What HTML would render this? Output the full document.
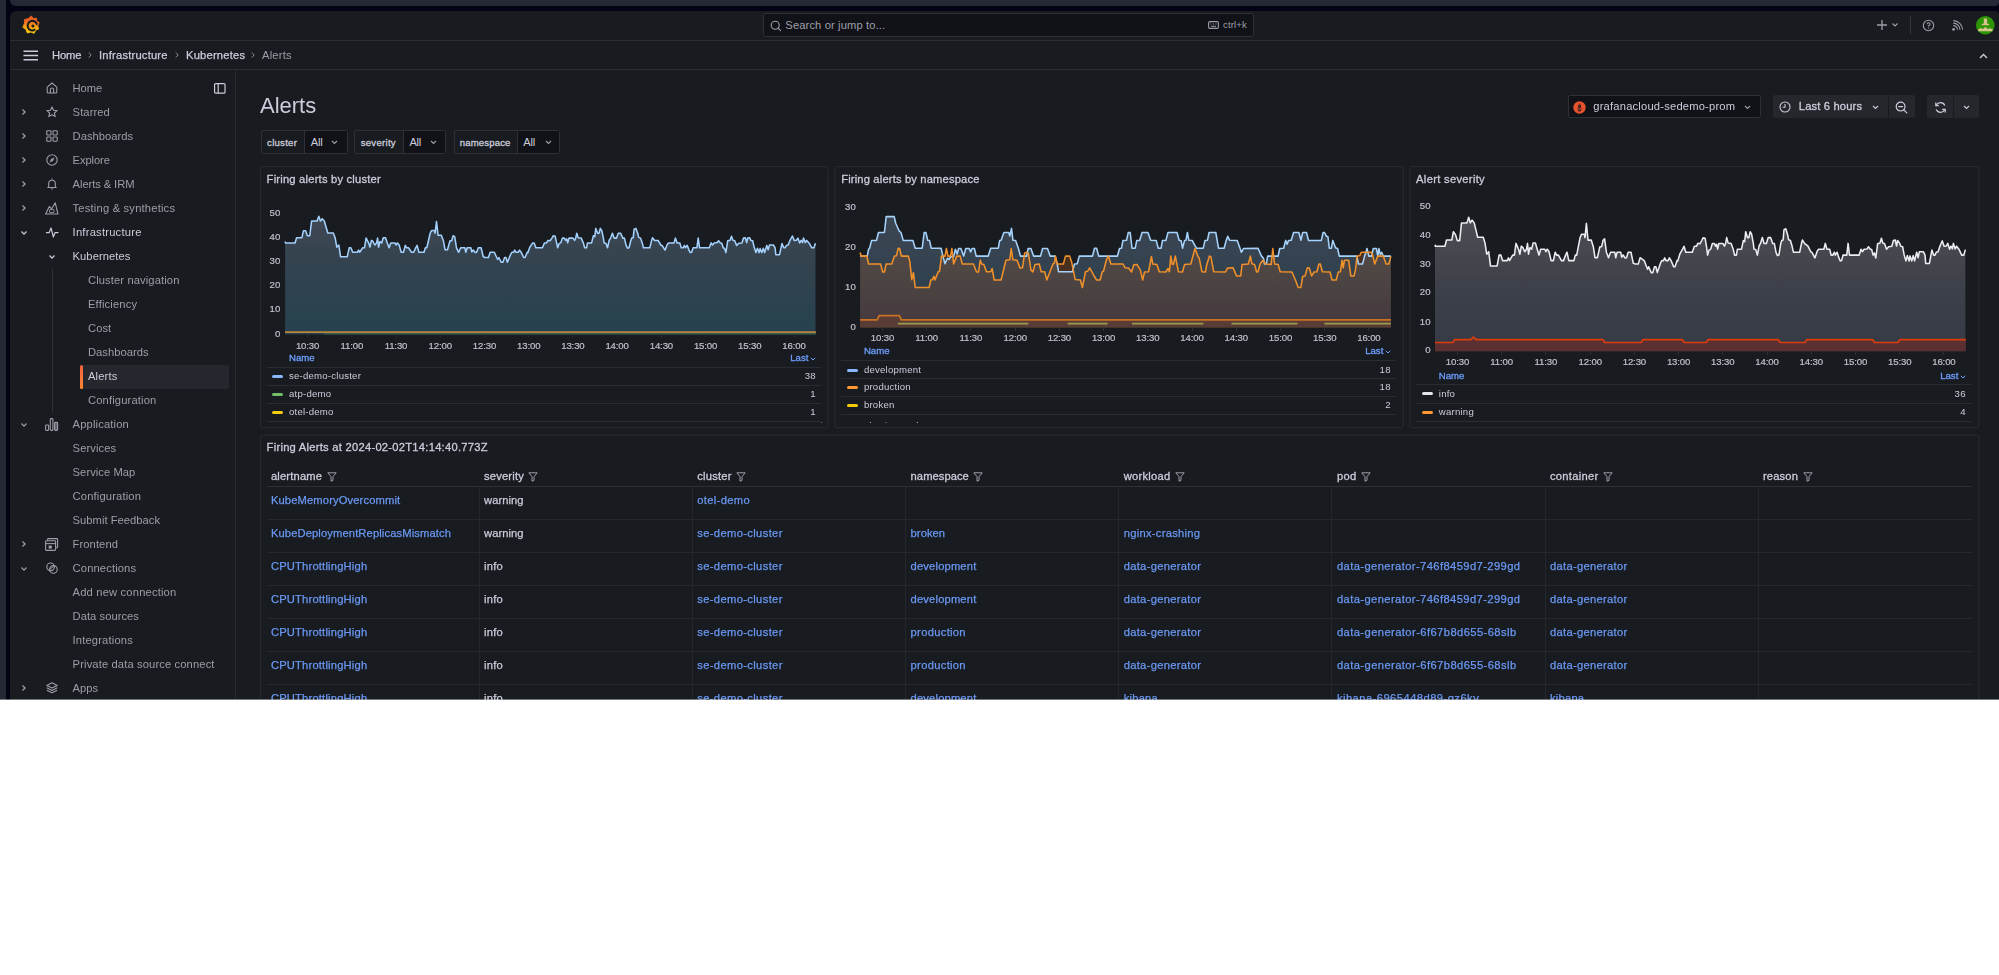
<!DOCTYPE html>
<html lang="en"><head><meta charset="utf-8"><title>Alerts - Kubernetes - Infrastructure - Grafana</title>
<style>
html,body{margin:0;padding:0}
body{width:1999px;height:975px;overflow:hidden;background:#fff;position:relative;font-family:"Liberation Sans",sans-serif;color:#ccccdc}
#frame{position:absolute;left:0;top:0;width:1999px;height:700px;background:#020416;overflow:hidden}
.lstrip{position:absolute;left:0;top:0;width:6px;height:700px;background:#252936}
.tcard{position:absolute;left:10px;top:0;width:1989px;height:6px;background:#252936;border-radius:0 0 4px 6px}
#app{position:absolute;left:10px;top:11px;width:1989px;height:689px;background:#181b1f;border-radius:6px 4px 0 0}
.abs{position:absolute}
.t{position:absolute;white-space:nowrap;line-height:1}
.hl{position:absolute;height:1px;background:#2c2e34}
.vl{position:absolute;width:1px;background:#2c2e34}
svg{position:absolute;overflow:visible}
.pri{color:#ccccdc}
.sec{color:#9d9eab}
.lnk{color:#6e9fff}
#content{position:absolute;left:0;top:0;width:1999px;height:760px;filter:blur(0.4px)}
.bfade{position:absolute;left:0;top:699px;width:1999px;height:1px;background:rgba(255,255,255,0.4)}

</style></head>
<body>
<div id="frame">
<div class="lstrip"></div><div class="tcard"></div>
<div id="app"></div>
<div id="content">
<!-- top bar -->
<div class="hl" style="left:10px;top:40px;width:1989px"></div>
<div class="hl" style="left:10px;top:69px;width:1989px"></div>
<svg style="left:22px;top:15px" width="18" height="19.8" viewBox="0 0 18 19" preserveAspectRatio="none">
<defs><linearGradient id="gl" gradientUnits="userSpaceOnUse" x1="0" y1="18" x2="0" y2="1"><stop offset="0" stop-color="#fcd40a"/><stop offset="0.35" stop-color="#f8a612"/><stop offset="0.7" stop-color="#f26a22"/><stop offset="1" stop-color="#f05a28"/></linearGradient></defs>
<path fill="url(#gl)" stroke="url(#gl)" stroke-width="0.8" stroke-linejoin="round" d="M9.3 0.9 L11.4 3.3 L14.5 3.0 L14.7 5.9 L17.2 7.2 L15.8 10.2 L16.6 13.5 L13.6 14.6 L12.2 17.6 L8.8 16.4 L5.3 17.3 L3.8 13.8 L0.8 11.8 L2.4 8.0 L2.5 4.2 L6.2 3.5Z"/>
<path d="M14.84 8.56 L14.47 7.87 L14.00 7.24 L13.43 6.70 L12.78 6.25 L12.08 5.92 L11.33 5.71 L10.56 5.62 L9.79 5.66 L9.04 5.82 L8.32 6.10 L7.67 6.49 L7.08 6.97 L6.59 7.55 L6.19 8.19 L5.90 8.89 L5.73 9.62 L5.68 10.36 L5.75 11.10 L5.94 11.82 L6.24 12.50 L6.65 13.11 L7.14 13.65 L7.72 14.11 L8.36 14.46 L9.04 14.70 L9.75 14.83 L10.47 14.85 L11.18 14.74 L11.86 14.53 L12.50 14.21" fill="none" stroke="#181b1f" stroke-width="2" stroke-linecap="round"/>
<circle cx="10.900" cy="10.500" r="1.500" fill="#181b1f"/>
</svg>
<!-- search -->
<div class="abs" style="left:763px;top:13px;width:491px;height:24px;background:#111217;border:1px solid #2e3036;border-radius:2px;box-sizing:border-box"></div>
<svg style="left:770px;top:19.500px" width="12" height="12" viewBox="0 0 12 12"><circle cx="5.2" cy="5.2" r="4" fill="none" stroke="#9d9eab" stroke-width="1.1"/><path d="M8.2 8.2 L10.6 10.6" stroke="#9d9eab" stroke-width="1.1" stroke-linecap="round"/></svg>
<div class="t sec" style="left:785.300px;top:20px;font-size:11.2px;letter-spacing:0.12px">Search or jump to...</div>
<svg style="left:1208px;top:21px" width="11" height="8" viewBox="0 0 11 8"><rect x="0.6" y="0.6" width="9.8" height="6.8" rx="1.4" fill="none" stroke="#9d9eab" stroke-width="1.1"/><path d="M2.5 3h1M5 3h1M7.5 3h1M3 5.3h5" stroke="#9d9eab" stroke-width="1"/></svg>
<div class="t sec" style="left:1223px;top:20px;font-size:9.6px;letter-spacing:0.1px">ctrl+k</div>
<!-- right icons -->
<svg style="left:1876px;top:19px" width="12" height="12" viewBox="0 0 12 12"><path d="M6 1v10M1 6h10" stroke="#9d9eab" stroke-width="1.3" fill="none"/></svg>
<svg style="left:1891px;top:22px" width="8" height="6" viewBox="0 0 8 6"><path d="M1.5 1.5L4 4l2.5-2.5" stroke="#9d9eab" stroke-width="1.1" fill="none"/></svg>
<div class="vl" style="left:1910px;top:16px;height:18px;background:#34363d"></div>
<svg style="left:1922px;top:19px" width="13" height="13" viewBox="0 0 13 13"><circle cx="6.5" cy="6.5" r="5.2" fill="none" stroke="#9d9eab" stroke-width="1.1"/><path d="M5.2 5.2a1.4 1.4 0 1 1 1.9 1.3c-.4.2-.6.4-.6.9" fill="none" stroke="#9d9eab" stroke-width="1.1"/><circle cx="6.5" cy="9.1" r="0.7" fill="#9d9eab"/></svg>
<svg style="left:1951px;top:19px" width="13" height="13" viewBox="0 0 13 13"><circle cx="2.6" cy="10.4" r="1.4" fill="#9d9eab"/><path d="M2.3 6.6a4.2 4.2 0 0 1 4.2 4.2M2.3 4.1a6.7 6.7 0 0 1 6.7 6.7M2.3 1.6a9.2 9.2 0 0 1 9.2 9.2" fill="none" stroke="#9d9eab" stroke-width="1.1"/></svg>
<svg style="left:1976.400px;top:15.600px" width="18.600" height="18.600" viewBox="0 0 18.600 18.600"><circle cx="9.300" cy="9.300" r="9.300" fill="#2c9605"/><path d="M7.800 2.600H11.100V7.400L13.200 8V9.300H5.700V8L7.800 7.400Z" fill="#d9c48f"/><path d="M2.200 13.300L3.800 12.800L4.600 11.400L5.400 12.800L7.200 13L8 11.600H10.800L11.600 13L13.200 12.800L14 11.400L14.800 12.800L16.600 13.300V15.200H2.200Z" fill="#d9c48f"/></svg>
<!-- breadcrumb -->
<svg style="left:23px;top:50px" width="16" height="11" viewBox="0 0 16 11"><path d="M0.5 1.2h14.5M0.5 5.5h14.5M0.5 9.8h14.5" stroke="#ccccdc" stroke-width="1.5" fill="none"/></svg>
<div class="t pri" style="left:52px;top:50px;font-size:11.2px;letter-spacing:-0.1px;-webkit-text-stroke:0.25px #ccccdc">Home</div>
<svg style="left:87px;top:51px" width="6" height="8" viewBox="0 0 6 8"><path d="M1.800 1.500L4.200 4L1.800 6.500" stroke="#8e8f9c" stroke-width="1" fill="none"/></svg>
<div class="t pri" style="left:99px;top:50px;font-size:11.2px;letter-spacing:0.2px;-webkit-text-stroke:0.25px #ccccdc">Infrastructure</div>
<svg style="left:174px;top:51px" width="6" height="8" viewBox="0 0 6 8"><path d="M1.800 1.500L4.200 4L1.800 6.500" stroke="#8e8f9c" stroke-width="1" fill="none"/></svg>
<div class="t pri" style="left:186px;top:50px;font-size:11.2px;letter-spacing:0.2px;-webkit-text-stroke:0.25px #ccccdc">Kubernetes</div>
<svg style="left:250px;top:51px" width="6" height="8" viewBox="0 0 6 8"><path d="M1.800 1.500L4.200 4L1.800 6.500" stroke="#8e8f9c" stroke-width="1" fill="none"/></svg>
<div class="t sec" style="left:262px;top:50px;font-size:11.2px;letter-spacing:0.2px">Alerts</div>
<svg style="left:1979px;top:53px" width="9" height="6" viewBox="0 0 9 6"><path d="M1 5L4.5 1.5L8 5" stroke="#ccccdc" stroke-width="1.4" fill="none"/></svg>
<!-- sidebar -->
<div class="vl" style="left:235px;top:70px;height:630px;background:#272a2f"></div>
<div class="vl" style="left:52px;top:269px;height:144px;background:#2f3137"></div>
<div class="abs" style="left:80px;top:365px;width:149px;height:24px;background:#24272d;border-radius:2px"></div>
<div class="abs" style="left:80px;top:365px;width:3px;height:24px;background:linear-gradient(#f55f3e,#ff8833);border-radius:2px"></div>
<svg style="left:214px;top:83px" width="12" height="11" viewBox="0 0 12 11"><rect x="0.6" y="0.6" width="10.4" height="9.6" rx="1" fill="none" stroke="#ccccdc" stroke-width="1.2"/><path d="M4.2 0.6V10.2" stroke="#ccccdc" stroke-width="1.2"/></svg>
<div class="t sec" style="left:72.6px;top:83px;font-size:11.2px;letter-spacing:-0.061px">Home</div>
<svg style="left:45.8px;top:82.4px" width="12" height="12" viewBox="0 0 12 12"><path d="M1.2 5.2 L6 1 L10.8 5.2 V10 a1 1 0 0 1 -1 1 H2.2 a1 1 0 0 1 -1 -1 Z" fill="none" stroke="#9d9eab" stroke-width="1.1" stroke-linejoin="round"/><path d="M4.4 11 V7.6 a1.6 1.6 0 0 1 3.2 0 V11" fill="none" stroke="#9d9eab" stroke-width="1.1"/></svg>
<div class="t sec" style="left:72.6px;top:107px;font-size:11.2px;letter-spacing:0.087px">Starred</div>
<svg style="left:45.8px;top:106.4px" width="12" height="12" viewBox="0 0 12 12"><path d="M6 0.9 L7.5 4.2 L11.1 4.6 L8.4 7 L9.2 10.6 L6 8.8 L2.8 10.6 L3.6 7 L0.9 4.6 L4.5 4.2 Z" fill="none" stroke="#9d9eab" stroke-width="1.1" stroke-linejoin="round"/></svg>
<svg style="left:21.3px;top:108.2px" width="6" height="8" viewBox="0 0 6 8"><path d="M1.5 1.5L4.1 4L1.5 6.5" stroke="#9d9eab" stroke-width="1.25" fill="none"/></svg>
<div class="t sec" style="left:72.6px;top:131px;font-size:11.2px;letter-spacing:0.027px">Dashboards</div>
<svg style="left:45.8px;top:130.4px" width="12" height="12" viewBox="0 0 12 12"><rect x="0.8" y="0.8" width="4.2" height="4.2" rx="0.6" fill="none" stroke="#9d9eab" stroke-width="1.1"/><rect x="7" y="0.8" width="4.2" height="4.2" rx="0.6" fill="none" stroke="#9d9eab" stroke-width="1.1"/><rect x="0.8" y="7" width="4.2" height="4.2" rx="0.6" fill="none" stroke="#9d9eab" stroke-width="1.1"/><rect x="7" y="7" width="4.2" height="4.2" rx="0.6" fill="none" stroke="#9d9eab" stroke-width="1.1"/></svg>
<svg style="left:21.3px;top:132.2px" width="6" height="8" viewBox="0 0 6 8"><path d="M1.5 1.5L4.1 4L1.5 6.5" stroke="#9d9eab" stroke-width="1.25" fill="none"/></svg>
<div class="t sec" style="left:72.6px;top:155px;font-size:11.2px;letter-spacing:-0.105px">Explore</div>
<svg style="left:45.8px;top:154.4px" width="12" height="12" viewBox="0 0 12 12"><circle cx="6" cy="6" r="5.2" fill="none" stroke="#9d9eab" stroke-width="1.1"/><path d="M8.4 3.6 L7 7 L3.6 8.4 L5 5 Z" fill="#9d9eab"/></svg>
<svg style="left:21.3px;top:156.2px" width="6" height="8" viewBox="0 0 6 8"><path d="M1.5 1.5L4.1 4L1.5 6.5" stroke="#9d9eab" stroke-width="1.25" fill="none"/></svg>
<div class="t sec" style="left:72.6px;top:179px;font-size:11.2px;letter-spacing:-0.083px">Alerts &amp; IRM</div>
<svg style="left:45.8px;top:178.4px" width="12" height="12" viewBox="0 0 12 12"><path d="M2.700 8.500 V5.500 a3.300 3.300 0 0 1 6.600 0 V8.500 l0.900 1 H1.800 Z" fill="none" stroke="#9d9eab" stroke-width="1.1" stroke-linejoin="round"/><path d="M4.6 10.6 a1.5 1.5 0 0 0 2.8 0 Z" fill="#9d9eab"/><path d="M6 0.4 V1.8" stroke="#9d9eab" stroke-width="1.1"/></svg>
<svg style="left:21.3px;top:180.2px" width="6" height="8" viewBox="0 0 6 8"><path d="M1.5 1.5L4.1 4L1.5 6.5" stroke="#9d9eab" stroke-width="1.25" fill="none"/></svg>
<div class="t sec" style="left:72.6px;top:203px;font-size:11.2px;letter-spacing:0.186px">Testing &amp; synthetics</div>
<svg style="left:44.8px;top:201.9px" width="14" height="13" viewBox="0 0 14 13"><path d="M0.6 12 L4.4 4.4 L6.6 7 L10.2 0.8 L13 12 Z" fill="none" stroke="#9d9eab" stroke-width="1.1" stroke-linejoin="round"/><rect x="4.6" y="7.6" width="4.4" height="3" rx="0.5" fill="none" stroke="#9d9eab" stroke-width="0.9"/></svg>
<svg style="left:21.3px;top:204.2px" width="6" height="8" viewBox="0 0 6 8"><path d="M1.5 1.5L4.1 4L1.5 6.5" stroke="#9d9eab" stroke-width="1.25" fill="none"/></svg>
<div class="t pri" style="left:72.6px;top:227px;font-size:11.2px;letter-spacing:0.220px">Infrastructure</div>
<svg style="left:45.8px;top:226.4px" width="12" height="12" viewBox="0 0 12 12"><path d="M0.4 6.6 H3.2 L5 2 L7.4 11 L9 6.6 H12" fill="none" stroke="#ccccdc" stroke-width="1.2" stroke-linejoin="round" stroke-linecap="round"/></svg>
<svg style="left:20.2px;top:229.6px" width="8" height="6" viewBox="0 0 8 6"><path d="M1.5 1.5L4 4.1L6.5 1.5" stroke="#ccccdc" stroke-width="1.25" fill="none"/></svg>
<div class="t pri" style="left:72.6px;top:251px;font-size:11.2px;letter-spacing:0.047px">Kubernetes</div>
<svg style="left:47.6px;top:253.6px" width="8" height="6" viewBox="0 0 8 6"><path d="M1.5 1.5L4 4.1L6.5 1.5" stroke="#ccccdc" stroke-width="1.25" fill="none"/></svg>
<div class="t sec" style="left:88.0px;top:275px;font-size:11.2px;letter-spacing:0.108px">Cluster navigation</div>
<div class="t sec" style="left:88.0px;top:299px;font-size:11.2px;letter-spacing:0.151px">Efficiency</div>
<div class="t sec" style="left:88.0px;top:323px;font-size:11.2px;letter-spacing:0.071px">Cost</div>
<div class="t sec" style="left:88.0px;top:347px;font-size:11.2px;letter-spacing:0.027px">Dashboards</div>
<div class="t pri" style="left:88.0px;top:371px;font-size:11.2px;letter-spacing:0.148px">Alerts</div>
<div class="t sec" style="left:88.0px;top:395px;font-size:11.2px;letter-spacing:0.150px">Configuration</div>
<div class="t sec" style="left:72.6px;top:419px;font-size:11.2px;letter-spacing:0.151px">Application</div>
<svg style="left:45.3px;top:417.9px" width="13" height="13" viewBox="0 0 13 13"><rect x="0.6" y="7" width="3" height="5.4" rx="0.8" fill="none" stroke="#9d9eab" stroke-width="1.1"/><rect x="5.3" y="0.6" width="2.6" height="11.8" rx="0.8" fill="none" stroke="#9d9eab" stroke-width="1.1"/><rect x="9.6" y="4.4" width="3" height="8" rx="0.8" fill="#9d9eab" fill-opacity="0.5" stroke="#9d9eab" stroke-width="1.1"/></svg>
<svg style="left:20.2px;top:421.6px" width="8" height="6" viewBox="0 0 8 6"><path d="M1.5 1.5L4 4.1L6.5 1.5" stroke="#9d9eab" stroke-width="1.25" fill="none"/></svg>
<div class="t sec" style="left:72.6px;top:443px;font-size:11.2px;letter-spacing:0.087px">Services</div>
<div class="t sec" style="left:72.6px;top:467px;font-size:11.2px;letter-spacing:0.056px">Service Map</div>
<div class="t sec" style="left:72.6px;top:491px;font-size:11.2px;letter-spacing:0.150px">Configuration</div>
<div class="t sec" style="left:72.6px;top:515px;font-size:11.2px;letter-spacing:0.023px">Submit Feedback</div>
<div class="t sec" style="left:72.6px;top:539px;font-size:11.2px;letter-spacing:0.077px">Frontend</div>
<svg style="left:45.3px;top:537.9px" width="13" height="13" viewBox="0 0 13 13"><path d="M2.6 2.6 V1.4 a0.8 0.8 0 0 1 0.8 -0.8 H11.8 a0.8 0.8 0 0 1 0.8 0.8 V9 a0.8 0.8 0 0 1 -0.8 0.8 H10.8" fill="none" stroke="#9d9eab" stroke-width="1.1"/><rect x="0.6" y="2.8" width="10" height="9.6" rx="0.8" fill="none" stroke="#9d9eab" stroke-width="1.1"/><path d="M0.6 5.6 H10.6" stroke="#9d9eab" stroke-width="1.1"/><rect x="3.6" y="7.6" width="3.2" height="3" fill="#9d9eab"/></svg>
<svg style="left:21.3px;top:540.2px" width="6" height="8" viewBox="0 0 6 8"><path d="M1.5 1.5L4.1 4L1.5 6.5" stroke="#9d9eab" stroke-width="1.25" fill="none"/></svg>
<div class="t sec" style="left:72.6px;top:563px;font-size:11.2px;letter-spacing:0.127px">Connections</div>
<svg style="left:45.8px;top:562.4px" width="12" height="12" viewBox="0 0 12 12"><circle cx="4.6" cy="4.8" r="3.8" fill="none" stroke="#9d9eab" stroke-width="1.1"/><circle cx="7.4" cy="7.4" r="3.8" fill="none" stroke="#9d9eab" stroke-width="1.1"/><path d="M4 7 L7.6 4.6" stroke="#9d9eab" stroke-width="1"/></svg>
<svg style="left:20.2px;top:565.6px" width="8" height="6" viewBox="0 0 8 6"><path d="M1.5 1.5L4 4.1L6.5 1.5" stroke="#9d9eab" stroke-width="1.25" fill="none"/></svg>
<div class="t sec" style="left:72.6px;top:587px;font-size:11.2px;letter-spacing:0.169px">Add new connection</div>
<div class="t sec" style="left:72.6px;top:611px;font-size:11.2px;letter-spacing:0.040px">Data sources</div>
<div class="t sec" style="left:72.6px;top:635px;font-size:11.2px;letter-spacing:0.153px">Integrations</div>
<div class="t sec" style="left:72.6px;top:659px;font-size:11.2px;letter-spacing:0.123px">Private data source connect</div>
<div class="t sec" style="left:72.6px;top:683px;font-size:11.2px;letter-spacing:0.025px">Apps</div>
<svg style="left:45.8px;top:682.4px" width="12" height="12" viewBox="0 0 12 12"><path d="M6 0.8 L11.2 3.4 L6 6 L0.8 3.4 Z" fill="none" stroke="#9d9eab" stroke-width="1.1" stroke-linejoin="round"/><path d="M0.8 5.8 L6 8.4 L11.2 5.8 M0.8 8.2 L6 10.8 L11.2 8.2" fill="none" stroke="#9d9eab" stroke-width="1.1" stroke-linejoin="round"/></svg>
<svg style="left:21.3px;top:684.2px" width="6" height="8" viewBox="0 0 6 8"><path d="M1.5 1.5L4.1 4L1.5 6.5" stroke="#9d9eab" stroke-width="1.25" fill="none"/></svg>
<!-- main header -->
<div class="t pri" style="left:260px;top:95px;font-size:22px;letter-spacing:-0.008px">Alerts</div>
<div class="abs" style="left:260.6px;top:130px;width:87.2px;height:24px;box-sizing:border-box;border:1px solid #2e3036;border-radius:2px;background:#181b1f"></div>
<div class="abs" style="left:304.0px;top:131px;width:41.6px;height:22px;background:#111217;border-left:1px solid #2e3036"></div>
<div class="t pri" style="left:267.1px;top:138px;font-size:9.6px;letter-spacing:0.248px;-webkit-text-stroke:0.3px #ccccdc">cluster</div>
<div class="t pri" style="left:310.7px;top:137px;font-size:11.2px;letter-spacing:-0.246px">All</div>
<svg style="left:331.1px;top:140px" width="7" height="5" viewBox="0 0 7 5"><path d="M1 1L3.5 3.5L6 1" stroke="#9d9eab" stroke-width="1.1" fill="none"/></svg>
<div class="abs" style="left:354.4px;top:130px;width:91.3px;height:24px;box-sizing:border-box;border:1px solid #2e3036;border-radius:2px;background:#181b1f"></div>
<div class="abs" style="left:402.5px;top:131px;width:41.0px;height:22px;background:#111217;border-left:1px solid #2e3036"></div>
<div class="t pri" style="left:360.7px;top:138px;font-size:9.6px;letter-spacing:0.267px;-webkit-text-stroke:0.3px #ccccdc">severity</div>
<div class="t pri" style="left:409.4px;top:137px;font-size:11.2px;letter-spacing:-0.246px">All</div>
<svg style="left:430.2px;top:140px" width="7" height="5" viewBox="0 0 7 5"><path d="M1 1L3.5 3.5L6 1" stroke="#9d9eab" stroke-width="1.1" fill="none"/></svg>
<div class="abs" style="left:453.5px;top:130px;width:106.6px;height:24px;box-sizing:border-box;border:1px solid #2e3036;border-radius:2px;background:#181b1f"></div>
<div class="abs" style="left:516.5px;top:131px;width:41.4px;height:22px;background:#111217;border-left:1px solid #2e3036"></div>
<div class="t pri" style="left:459.8px;top:138px;font-size:9.6px;letter-spacing:0.132px;-webkit-text-stroke:0.3px #ccccdc">namespace</div>
<div class="t pri" style="left:523.2px;top:137px;font-size:11.2px;letter-spacing:-0.246px">All</div>
<svg style="left:544.5px;top:140px" width="7" height="5" viewBox="0 0 7 5"><path d="M1 1L3.5 3.5L6 1" stroke="#9d9eab" stroke-width="1.1" fill="none"/></svg>
<div class="abs" style="left:1567.5px;top:95px;width:193px;height:23px;box-sizing:border-box;border:1px solid #2e3036;border-radius:2px;background:#111217"></div>
<svg style="left:1573.3px;top:100.6px" width="13" height="13" viewBox="0 0 13 13"><circle cx="6.5" cy="6.5" r="6.2" fill="#e6522c"/><path d="M6.5 2.2c.3 1 1.6 1.5 1.6 3.1 0 .8-.3 1.3-.6 1.7H5.500c-.3-.4-.6-.9-.6-1.700 0-.7.5-1 .8-1.500.2.500.3.700.500.900.2-.800.1-1.700.3-2.500Z M4.300 7.600h4.400v.9H4.300Z M4.900 9h3.200a1.600 1.600 0 0 1-3.200 0Z" fill="#181b1f" fill-opacity="0.85"/></svg>
<div class="t pri" style="left:1593.3px;top:101px;font-size:11.2px;letter-spacing:0.190px">grafanacloud-sedemo-prom</div>
<svg style="left:1744px;top:104.5px" width="7" height="5" viewBox="0 0 7 5"><path d="M1 1L3.5 3.5L6 1" stroke="#9d9eab" stroke-width="1.1" fill="none"/></svg>
<div class="abs" style="left:1772.5px;top:95px;width:142.5px;height:23px;border-radius:2px;background:#25272d"></div>
<div class="vl" style="left:1888px;top:95px;height:23px;background:#181b1f"></div>
<svg style="left:1779.4px;top:101px" width="12" height="12" viewBox="0 0 12 12"><circle cx="6" cy="6" r="5" fill="none" stroke="#ccccdc" stroke-width="1.1"/><path d="M6 3v3.200H3.600" fill="none" stroke="#ccccdc" stroke-width="1.1"/></svg>
<div class="t pri" style="left:1798.8px;top:101px;font-size:11.2px;letter-spacing:0.152px;-webkit-text-stroke:0.3px #ccccdc">Last 6 hours</div>
<svg style="left:1872px;top:104.5px" width="7" height="5" viewBox="0 0 7 5"><path d="M1 1L3.5 3.5L6 1" stroke="#ccccdc" stroke-width="1.1" fill="none"/></svg>
<svg style="left:1895px;top:100.500px" width="13" height="13" viewBox="0 0 13 13"><circle cx="5.600" cy="5.600" r="4.400" fill="none" stroke="#ccccdc" stroke-width="1.2"/><path d="M8.800 8.800L11.800 11.800M3.600 5.600h4" stroke="#ccccdc" stroke-width="1.2" stroke-linecap="round"/></svg>
<div class="abs" style="left:1926.7px;top:95px;width:52.3px;height:23px;border-radius:2px;background:#25272d"></div>
<div class="vl" style="left:1953px;top:95px;height:23px;background:#181b1f"></div>
<svg style="left:1933.5px;top:100.500px" width="13" height="13" viewBox="0 0 13 13"><path d="M10.800 4.500A4.700 4.700 0 0 0 2.300 4.200M2.200 8.500a4.700 4.700 0 0 0 8.500.300" fill="none" stroke="#ccccdc" stroke-width="1.2"/><path d="M1.800 1.600v3h3M11.200 11.400v-3h-3" fill="none" stroke="#ccccdc" stroke-width="1.2"/></svg>
<svg style="left:1962.5px;top:104.5px" width="7" height="5" viewBox="0 0 7 5"><path d="M1 1L3.5 3.5L6 1" stroke="#ccccdc" stroke-width="1.1" fill="none"/></svg>
<svg style="left:0;top:0" width="1999" height="760" viewBox="0 0 1999 760"><rect x="260.4" y="166.6" width="567.65" height="261.2" rx="2" fill="none" stroke="#292c32" stroke-width="1"/></svg>
<div class="t pri" style="left:266.6px;top:174px;font-size:11.2px;letter-spacing:0.203px;-webkit-text-stroke:0.3px #ccccdc">Firing alerts by cluster</div>
<svg style="left:0;top:0" width="1999" height="760" viewBox="0 0 1999 760"><rect x="835" y="166.6" width="568.2" height="261.2" rx="2" fill="none" stroke="#292c32" stroke-width="1"/></svg>
<div class="t pri" style="left:841.2px;top:174px;font-size:11.2px;letter-spacing:0.157px;-webkit-text-stroke:0.3px #ccccdc">Firing alerts by namespace</div>
<svg style="left:0;top:0" width="1999" height="760" viewBox="0 0 1999 760"><rect x="1409.9" y="166.6" width="569" height="261.2" rx="2" fill="none" stroke="#292c32" stroke-width="1"/></svg>
<div class="t pri" style="left:1416.1px;top:174px;font-size:11.2px;letter-spacing:0.303px;-webkit-text-stroke:0.3px #ccccdc">Alert severity</div>
<svg style="left:0;top:0" width="1999" height="760" viewBox="0 0 1999 760"><rect x="260.4" y="435.1" width="1718.5" height="290" rx="2" fill="none" stroke="#292c32" stroke-width="1"/></svg>
<div class="t pri" style="left:266.6px;top:442px;font-size:11.2px;letter-spacing:0.253px;-webkit-text-stroke:0.3px #ccccdc">Firing Alerts at 2024-02-02T14:14:40.773Z</div>
<!-- charts -->
<svg style="left:0;top:0" width="1999" height="700" viewBox="0 0 1999 700">
<defs>
<linearGradient id="g1" gradientUnits="userSpaceOnUse" x1="0" y1="210" x2="0" y2="333"><stop offset="0" stop-color="#434955"/><stop offset="0.4" stop-color="#34434f"/><stop offset="1" stop-color="#26424e"/></linearGradient>
<linearGradient id="g2b" gradientUnits="userSpaceOnUse" x1="0" y1="210" x2="0" y2="328"><stop offset="0" stop-color="#3f4654"/><stop offset="0.5" stop-color="#33424f"/><stop offset="1" stop-color="#27414e"/></linearGradient>
<linearGradient id="g2o" gradientUnits="userSpaceOnUse" x1="0" y1="245" x2="0" y2="328"><stop offset="0" stop-color="#544b46"/><stop offset="0.5" stop-color="#4b4342"/><stop offset="1" stop-color="#45383e"/></linearGradient>
<linearGradient id="g3" gradientUnits="userSpaceOnUse" x1="0" y1="215" x2="0" y2="351"><stop offset="0" stop-color="#4d4f55"/><stop offset="0.5" stop-color="#3e4149"/><stop offset="1" stop-color="#353a45"/></linearGradient>
</defs>
<path d="M285.1 241.5 L285.5 242.9 L295.0 242.9 L296.6 237.7 L301.9 237.7 L303.5 230.7 L305.6 230.7 L307.4 235.7 L309.8 235.7 L311.6 221.0 L317.1 221.0 L318.8 216.3 L320.4 221.0 L322.2 218.7 L324.3 221.0 L327.8 233.0 L333.3 233.0 L335.1 237.7 L336.8 247.1 L338.8 245.0 L340.6 256.8 L347.2 256.8 L349.2 247.8 L350.9 247.8 L352.7 252.3 L357.3 252.3 L358.6 250.1 L359.6 252.3 L362.8 247.8 L364.5 247.8 L366.1 238.1 L368.6 242.9 L370.0 247.1 L371.4 240.4 L373.0 241.5 L374.8 245.0 L376.6 242.9 L377.6 238.1 L378.6 247.1 L380.0 241.5 L381.8 242.9 L383.2 237.7 L385.5 237.7 L387.3 242.9 L389.1 247.8 L390.8 242.9 L394.9 242.9 L396.0 245.0 L397.4 242.9 L399.1 245.0 L401.2 252.3 L403.5 252.3 L405.3 245.4 L406.7 247.8 L408.5 247.8 L411.5 252.3 L413.6 252.3 L415.7 247.8 L417.1 245.4 L418.9 252.3 L424.0 252.3 L425.4 247.8 L426.8 247.8 L430.2 233.2 L431.6 230.5 L434.4 230.5 L435.1 233.2 L436.5 221.5 L438.1 235.3 L441.3 235.3 L443.4 240.8 L445.1 249.8 L447.5 249.8 L450.0 240.8 L451.7 240.8 L453.1 235.7 L454.7 236.7 L456.5 247.8 L458.6 252.3 L460.7 247.8 L464.9 247.8 L465.8 252.3 L467.2 247.8 L470.8 247.8 L471.8 251.9 L473.2 250.1 L475.2 252.6 L476.6 252.3 L478.3 247.8 L481.1 247.8 L483.3 256.8 L484.9 257.5 L488.4 257.5 L490.2 252.3 L494.3 252.3 L496.7 257.5 L497.7 259.5 L498.8 257.5 L501.3 262.3 L502.9 262.3 L504.6 257.5 L506.0 257.5 L507.4 262.3 L510.5 254.7 L511.9 252.3 L513.7 252.3 L514.7 250.1 L516.1 252.3 L518.2 252.3 L519.5 250.1 L521.2 252.3 L523.7 257.5 L525.1 257.5 L527.2 252.3 L527.9 252.6 L529.9 247.1 L532.7 242.9 L534.1 242.9 L535.9 247.8 L542.4 247.8 L544.5 242.9 L546.5 242.9 L548.0 240.4 L550.1 240.8 L551.9 238.1 L553.3 235.7 L555.2 236.3 L556.6 242.9 L557.7 247.8 L559.1 243.6 L560.7 242.9 L562.5 238.1 L564.3 238.1 L565.7 240.4 L566.7 238.8 L567.7 242.9 L569.0 238.1 L572.9 238.1 L574.6 240.4 L575.7 238.1 L576.8 233.2 L578.2 237.7 L581.2 238.1 L583.3 242.9 L584.7 247.8 L586.5 247.8 L587.5 242.9 L591.6 242.9 L593.4 235.7 L594.8 236.7 L595.8 228.4 L597.6 233.2 L599.0 233.2 L600.3 228.4 L601.7 230.5 L603.4 238.1 L604.1 242.9 L605.9 243.2 L607.5 247.8 L609.2 240.2 L610.6 238.1 L612.4 233.2 L614.2 238.1 L616.5 238.1 L618.3 233.2 L620.7 233.2 L622.8 238.1 L624.4 238.1 L626.2 245.7 L627.6 248.2 L629.0 247.8 L630.8 240.8 L631.8 238.1 L633.2 237.7 L634.1 229.1 L635.9 228.4 L637.7 233.2 L638.7 237.4 L640.5 238.1 L642.2 242.9 L643.5 247.8 L649.8 247.8 L651.6 240.4 L652.5 237.7 L654.6 240.4 L658.1 240.4 L660.8 245.0 L662.2 245.7 L665.0 250.1 L667.4 244.3 L668.7 242.9 L674.0 242.9 L675.4 238.1 L677.1 242.9 L679.8 242.9 L681.2 247.8 L683.0 247.8 L684.4 245.4 L685.4 247.8 L687.2 245.4 L689.0 250.1 L690.3 252.6 L691.7 252.3 L693.1 247.8 L696.9 247.8 L698.2 238.1 L699.6 247.8 L709.3 247.8 L711.1 242.9 L712.5 245.0 L714.2 242.9 L717.2 242.6 L718.6 240.8 L720.4 242.9 L721.8 243.2 L723.2 247.8 L724.5 248.5 L725.9 252.6 L727.7 240.8 L730.1 240.2 L731.5 236.3 L732.9 240.2 L734.7 240.8 L736.6 245.4 L738.8 243.2 L741.9 242.9 L743.5 238.1 L745.3 237.7 L746.7 242.6 L747.7 238.1 L749.5 237.7 L750.9 240.4 L752.7 240.8 L754.3 247.8 L756.0 252.6 L757.4 248.2 L759.2 252.6 L760.1 248.5 L761.9 252.6 L763.3 248.2 L764.7 252.6 L766.8 245.4 L768.2 249.8 L769.5 245.0 L773.4 245.0 L775.1 247.8 L775.8 254.7 L779.5 254.7 L782.0 243.6 L783.7 247.8 L785.1 247.8 L786.4 245.4 L788.2 245.0 L790.0 240.4 L792.4 236.0 L794.2 240.4 L796.5 240.2 L797.9 238.1 L799.7 242.9 L801.1 240.4 L802.5 242.6 L803.5 238.1 L805.3 242.6 L806.7 240.4 L809.0 242.9 L811.8 247.8 L813.9 247.8 L815.5 243.2 L815.5 334.5 L285.1 334.5 Z" fill="url(#g1)"/>
<path d="M285.1 241.5 L285.5 242.9 L295.0 242.9 L296.6 237.7 L301.9 237.7 L303.5 230.7 L305.6 230.7 L307.4 235.7 L309.8 235.7 L311.6 221.0 L317.1 221.0 L318.8 216.3 L320.4 221.0 L322.2 218.7 L324.3 221.0 L327.8 233.0 L333.3 233.0 L335.1 237.7 L336.8 247.1 L338.8 245.0 L340.6 256.8 L347.2 256.8 L349.2 247.8 L350.9 247.8 L352.7 252.3 L357.3 252.3 L358.6 250.1 L359.6 252.3 L362.8 247.8 L364.5 247.8 L366.1 238.1 L368.6 242.9 L370.0 247.1 L371.4 240.4 L373.0 241.5 L374.8 245.0 L376.6 242.9 L377.6 238.1 L378.6 247.1 L380.0 241.5 L381.8 242.9 L383.2 237.7 L385.5 237.7 L387.3 242.9 L389.1 247.8 L390.8 242.9 L394.9 242.9 L396.0 245.0 L397.4 242.9 L399.1 245.0 L401.2 252.3 L403.5 252.3 L405.3 245.4 L406.7 247.8 L408.5 247.8 L411.5 252.3 L413.6 252.3 L415.7 247.8 L417.1 245.4 L418.9 252.3 L424.0 252.3 L425.4 247.8 L426.8 247.8 L430.2 233.2 L431.6 230.5 L434.4 230.5 L435.1 233.2 L436.5 221.5 L438.1 235.3 L441.3 235.3 L443.4 240.8 L445.1 249.8 L447.5 249.8 L450.0 240.8 L451.7 240.8 L453.1 235.7 L454.7 236.7 L456.5 247.8 L458.6 252.3 L460.7 247.8 L464.9 247.8 L465.8 252.3 L467.2 247.8 L470.8 247.8 L471.8 251.9 L473.2 250.1 L475.2 252.6 L476.6 252.3 L478.3 247.8 L481.1 247.8 L483.3 256.8 L484.9 257.5 L488.4 257.5 L490.2 252.3 L494.3 252.3 L496.7 257.5 L497.7 259.5 L498.8 257.5 L501.3 262.3 L502.9 262.3 L504.6 257.5 L506.0 257.5 L507.4 262.3 L510.5 254.7 L511.9 252.3 L513.7 252.3 L514.7 250.1 L516.1 252.3 L518.2 252.3 L519.5 250.1 L521.2 252.3 L523.7 257.5 L525.1 257.5 L527.2 252.3 L527.9 252.6 L529.9 247.1 L532.7 242.9 L534.1 242.9 L535.9 247.8 L542.4 247.8 L544.5 242.9 L546.5 242.9 L548.0 240.4 L550.1 240.8 L551.9 238.1 L553.3 235.7 L555.2 236.3 L556.6 242.9 L557.7 247.8 L559.1 243.6 L560.7 242.9 L562.5 238.1 L564.3 238.1 L565.7 240.4 L566.7 238.8 L567.7 242.9 L569.0 238.1 L572.9 238.1 L574.6 240.4 L575.7 238.1 L576.8 233.2 L578.2 237.7 L581.2 238.1 L583.3 242.9 L584.7 247.8 L586.5 247.8 L587.5 242.9 L591.6 242.9 L593.4 235.7 L594.8 236.7 L595.8 228.4 L597.6 233.2 L599.0 233.2 L600.3 228.4 L601.7 230.5 L603.4 238.1 L604.1 242.9 L605.9 243.2 L607.5 247.8 L609.2 240.2 L610.6 238.1 L612.4 233.2 L614.2 238.1 L616.5 238.1 L618.3 233.2 L620.7 233.2 L622.8 238.1 L624.4 238.1 L626.2 245.7 L627.6 248.2 L629.0 247.8 L630.8 240.8 L631.8 238.1 L633.2 237.7 L634.1 229.1 L635.9 228.4 L637.7 233.2 L638.7 237.4 L640.5 238.1 L642.2 242.9 L643.5 247.8 L649.8 247.8 L651.6 240.4 L652.5 237.7 L654.6 240.4 L658.1 240.4 L660.8 245.0 L662.2 245.7 L665.0 250.1 L667.4 244.3 L668.7 242.9 L674.0 242.9 L675.4 238.1 L677.1 242.9 L679.8 242.9 L681.2 247.8 L683.0 247.8 L684.4 245.4 L685.4 247.8 L687.2 245.4 L689.0 250.1 L690.3 252.6 L691.7 252.3 L693.1 247.8 L696.9 247.8 L698.2 238.1 L699.6 247.8 L709.3 247.8 L711.1 242.9 L712.5 245.0 L714.2 242.9 L717.2 242.6 L718.6 240.8 L720.4 242.9 L721.8 243.2 L723.2 247.8 L724.5 248.5 L725.9 252.6 L727.7 240.8 L730.1 240.2 L731.5 236.3 L732.9 240.2 L734.7 240.8 L736.6 245.4 L738.8 243.2 L741.9 242.9 L743.5 238.1 L745.3 237.7 L746.7 242.6 L747.7 238.1 L749.5 237.7 L750.9 240.4 L752.7 240.8 L754.3 247.8 L756.0 252.6 L757.4 248.2 L759.2 252.6 L760.1 248.5 L761.9 252.6 L763.3 248.2 L764.7 252.6 L766.8 245.4 L768.2 249.8 L769.5 245.0 L773.4 245.0 L775.1 247.8 L775.8 254.7 L779.5 254.7 L782.0 243.6 L783.7 247.8 L785.1 247.8 L786.4 245.4 L788.2 245.0 L790.0 240.4 L792.4 236.0 L794.2 240.4 L796.5 240.2 L797.9 238.1 L799.7 242.9 L801.1 240.4 L802.5 242.6 L803.5 238.1 L805.3 242.6 L806.7 240.4 L809.0 242.9 L811.8 247.8 L813.9 247.8 L815.5 243.2" fill="none" stroke="#a3d0fc" stroke-width="1.55" stroke-linejoin="round"/>
<path d="M324.0 333.900H815.9" stroke="#38604f" stroke-width="1.400"/>
<path d="M285 332.100H815.900" stroke="#ba853d" stroke-width="1.800"/>
<clipPath id="cpb"><path d="M860.1 256.1 L867.2 256.1 L868.6 249.2 L869.5 248.5 L871.6 240.4 L876.5 240.4 L878.5 232.5 L884.4 232.5 L886.2 216.6 L894.2 216.6 L895.8 223.5 L899.3 231.2 L901.0 232.5 L903.2 240.4 L912.9 240.4 L915.2 248.2 L922.2 248.2 L924.2 232.5 L925.9 232.5 L927.7 240.2 L929.5 240.4 L931.2 248.2 L941.1 248.2 L942.9 256.1 L945.0 263.7 L947.5 258.2 L949.2 259.5 L950.5 256.8 L953.6 256.8 L955.4 249.2 L957.2 254.0 L958.6 248.5 L960.9 248.5 L963.7 256.1 L965.8 248.5 L969.2 248.5 L970.6 251.9 L972.0 248.5 L974.4 248.5 L976.2 256.1 L988.2 256.1 L990.7 248.2 L998.3 248.2 L999.7 240.4 L1001.1 240.2 L1003.9 232.5 L1008.7 232.5 L1009.8 236.0 L1011.5 228.4 L1012.9 240.2 L1015.6 240.4 L1018.4 248.5 L1020.5 256.1 L1026.7 256.1 L1028.1 248.5 L1030.9 248.5 L1033.6 256.1 L1040.5 256.1 L1042.6 248.5 L1047.5 248.5 L1050.2 256.1 L1055.1 256.1 L1057.2 263.7 L1058.5 271.7 L1072.4 271.7 L1074.5 264.0 L1077.2 263.7 L1079.3 256.1 L1092.5 256.1 L1094.5 248.2 L1096.6 248.2 L1098.7 256.1 L1117.4 256.1 L1119.5 248.5 L1121.5 248.2 L1123.0 240.4 L1126.5 240.2 L1128.3 232.5 L1130.2 232.5 L1132.0 248.2 L1135.2 248.2 L1136.8 240.4 L1139.6 240.4 L1142.1 232.5 L1147.9 232.5 L1150.7 240.2 L1156.2 240.4 L1158.3 248.2 L1161.1 248.2 L1162.5 240.4 L1165.9 240.4 L1168.0 232.5 L1177.0 232.5 L1179.1 240.2 L1181.2 240.8 L1182.5 248.2 L1184.6 240.4 L1186.0 240.2 L1187.4 232.5 L1188.8 240.2 L1192.2 240.4 L1194.3 244.3 L1196.4 248.2 L1203.3 248.2 L1205.0 240.4 L1207.5 240.2 L1209.1 232.5 L1215.8 232.5 L1218.5 248.2 L1224.1 248.2 L1226.2 240.4 L1227.8 236.3 L1229.6 240.2 L1237.2 240.4 L1240.0 248.2 L1241.4 252.3 L1243.5 248.5 L1258.0 248.2 L1261.5 256.1 L1263.5 258.2 L1264.5 264.0 L1266.3 263.7 L1267.7 256.1 L1278.1 256.1 L1279.7 248.5 L1283.6 248.2 L1285.7 240.4 L1287.1 244.3 L1288.5 240.4 L1291.2 240.2 L1293.6 232.5 L1298.9 232.5 L1300.9 240.2 L1302.7 232.5 L1306.5 232.5 L1308.5 240.4 L1321.3 240.4 L1323.1 232.5 L1324.5 232.5 L1326.5 236.3 L1327.9 236.7 L1329.3 248.2 L1331.4 248.2 L1332.8 240.4 L1335.5 247.8 L1337.6 248.5 L1339.3 256.1 L1357.0 256.1 L1358.4 264.0 L1362.5 264.0 L1364.6 256.1 L1366.0 252.3 L1367.0 248.5 L1368.8 256.1 L1371.5 256.1 L1373.3 248.5 L1376.4 248.5 L1377.8 256.1 L1378.9 248.5 L1380.3 254.7 L1381.7 252.3 L1383.3 256.1 L1390.9 256.1 L1390.9 327.4 L860.1 327.4 Z"/></clipPath>
<path d="M860.1 256.1 L867.2 256.1 L868.6 249.2 L869.5 248.5 L871.6 240.4 L876.5 240.4 L878.5 232.5 L884.4 232.5 L886.2 216.6 L894.2 216.6 L895.8 223.5 L899.3 231.2 L901.0 232.5 L903.2 240.4 L912.9 240.4 L915.2 248.2 L922.2 248.2 L924.2 232.5 L925.9 232.5 L927.7 240.2 L929.5 240.4 L931.2 248.2 L941.1 248.2 L942.9 256.1 L945.0 263.7 L947.5 258.2 L949.2 259.5 L950.5 256.8 L953.6 256.8 L955.4 249.2 L957.2 254.0 L958.6 248.5 L960.9 248.5 L963.7 256.1 L965.8 248.5 L969.2 248.5 L970.6 251.9 L972.0 248.5 L974.4 248.5 L976.2 256.1 L988.2 256.1 L990.7 248.2 L998.3 248.2 L999.7 240.4 L1001.1 240.2 L1003.9 232.5 L1008.7 232.5 L1009.8 236.0 L1011.5 228.4 L1012.9 240.2 L1015.6 240.4 L1018.4 248.5 L1020.5 256.1 L1026.7 256.1 L1028.1 248.5 L1030.9 248.5 L1033.6 256.1 L1040.5 256.1 L1042.6 248.5 L1047.5 248.5 L1050.2 256.1 L1055.1 256.1 L1057.2 263.7 L1058.5 271.7 L1072.4 271.7 L1074.5 264.0 L1077.2 263.7 L1079.3 256.1 L1092.5 256.1 L1094.5 248.2 L1096.6 248.2 L1098.7 256.1 L1117.4 256.1 L1119.5 248.5 L1121.5 248.2 L1123.0 240.4 L1126.5 240.2 L1128.3 232.5 L1130.2 232.5 L1132.0 248.2 L1135.2 248.2 L1136.8 240.4 L1139.6 240.4 L1142.1 232.5 L1147.9 232.5 L1150.7 240.2 L1156.2 240.4 L1158.3 248.2 L1161.1 248.2 L1162.5 240.4 L1165.9 240.4 L1168.0 232.5 L1177.0 232.5 L1179.1 240.2 L1181.2 240.8 L1182.5 248.2 L1184.6 240.4 L1186.0 240.2 L1187.4 232.5 L1188.8 240.2 L1192.2 240.4 L1194.3 244.3 L1196.4 248.2 L1203.3 248.2 L1205.0 240.4 L1207.5 240.2 L1209.1 232.5 L1215.8 232.5 L1218.5 248.2 L1224.1 248.2 L1226.2 240.4 L1227.8 236.3 L1229.6 240.2 L1237.2 240.4 L1240.0 248.2 L1241.4 252.3 L1243.5 248.5 L1258.0 248.2 L1261.5 256.1 L1263.5 258.2 L1264.5 264.0 L1266.3 263.7 L1267.7 256.1 L1278.1 256.1 L1279.7 248.5 L1283.6 248.2 L1285.7 240.4 L1287.1 244.3 L1288.5 240.4 L1291.2 240.2 L1293.6 232.5 L1298.9 232.5 L1300.9 240.2 L1302.7 232.5 L1306.5 232.5 L1308.5 240.4 L1321.3 240.4 L1323.1 232.5 L1324.5 232.5 L1326.5 236.3 L1327.9 236.7 L1329.3 248.2 L1331.4 248.2 L1332.8 240.4 L1335.5 247.8 L1337.6 248.5 L1339.3 256.1 L1357.0 256.1 L1358.4 264.0 L1362.5 264.0 L1364.6 256.1 L1366.0 252.3 L1367.0 248.5 L1368.8 256.1 L1371.5 256.1 L1373.3 248.5 L1376.4 248.5 L1377.8 256.1 L1378.9 248.5 L1380.3 254.7 L1381.7 252.3 L1383.3 256.1 L1390.9 256.1 L1390.9 327.4 L860.1 327.4 Z" fill="url(#g2b)"/>
<path d="M860.1 252.6 L861.2 256.1 L866.8 256.1 L868.6 264.0 L880.6 264.0 L882.7 272.0 L884.4 272.0 L886.2 264.0 L891.7 264.0 L894.5 256.1 L896.5 255.7 L898.2 248.2 L899.6 248.5 L901.4 256.1 L908.3 256.1 L909.7 260.9 L911.8 279.6 L913.4 272.7 L915.2 287.5 L929.1 287.5 L930.9 280.0 L932.5 279.6 L933.9 276.2 L935.0 280.0 L938.1 272.0 L939.5 271.3 L941.5 256.1 L945.0 256.1 L946.4 248.5 L948.0 256.1 L950.5 256.1 L951.9 248.5 L953.6 264.0 L956.8 256.1 L960.2 256.1 L962.3 264.0 L973.4 264.0 L976.6 272.0 L978.5 272.0 L980.3 260.2 L981.7 264.0 L983.8 264.4 L986.5 271.7 L990.7 271.7 L992.1 268.5 L994.2 280.0 L1001.1 280.0 L1005.9 260.2 L1009.8 259.8 L1011.2 248.5 L1012.9 259.8 L1017.0 260.2 L1020.1 268.1 L1022.5 267.8 L1024.6 253.3 L1026.7 252.3 L1028.4 253.3 L1030.9 269.9 L1032.9 272.0 L1035.0 264.4 L1039.2 264.0 L1041.2 271.7 L1044.7 271.7 L1046.8 280.0 L1053.0 264.0 L1054.4 263.0 L1055.5 256.1 L1057.2 264.0 L1063.4 264.0 L1065.5 256.1 L1069.6 256.1 L1071.7 262.3 L1075.2 279.6 L1080.4 280.0 L1082.4 287.5 L1085.5 271.7 L1087.6 271.3 L1089.7 267.8 L1093.9 275.5 L1096.6 280.0 L1100.1 280.0 L1102.2 271.7 L1103.5 271.3 L1106.3 260.2 L1108.4 256.1 L1110.9 264.0 L1121.5 264.0 L1123.0 264.0 L1125.1 267.8 L1128.5 268.1 L1131.6 272.0 L1133.8 264.8 L1136.8 264.4 L1140.3 269.9 L1142.7 280.0 L1144.5 272.0 L1148.6 271.7 L1151.4 256.5 L1152.8 264.0 L1156.9 264.4 L1159.3 271.7 L1165.9 272.0 L1168.0 268.5 L1169.4 271.7 L1170.8 256.1 L1172.2 264.0 L1173.5 264.4 L1175.3 256.1 L1178.4 271.7 L1182.5 272.0 L1184.6 264.4 L1190.8 264.0 L1195.0 248.5 L1197.8 256.1 L1199.2 258.2 L1201.9 271.7 L1205.4 272.0 L1206.8 264.4 L1209.5 256.1 L1210.9 256.8 L1213.7 271.7 L1225.5 272.0 L1227.5 268.1 L1233.1 267.8 L1236.5 275.9 L1240.7 275.9 L1242.1 264.4 L1248.3 264.0 L1250.4 256.1 L1251.8 263.7 L1254.5 264.4 L1256.6 272.0 L1258.0 271.7 L1260.1 264.0 L1262.9 260.2 L1265.6 264.0 L1271.2 264.4 L1272.8 248.5 L1274.6 264.0 L1278.1 264.4 L1280.2 271.7 L1291.9 272.0 L1295.4 280.0 L1298.2 287.5 L1300.9 287.5 L1302.7 276.2 L1305.1 275.9 L1307.2 268.1 L1309.2 267.8 L1311.6 275.9 L1314.1 272.0 L1316.9 271.7 L1318.9 264.0 L1320.3 264.0 L1322.4 271.7 L1330.0 272.0 L1332.1 280.0 L1336.2 280.0 L1338.3 272.0 L1340.4 271.7 L1342.1 260.2 L1343.2 267.8 L1344.5 260.2 L1348.7 260.2 L1350.8 275.9 L1354.0 275.9 L1355.6 269.2 L1357.0 256.1 L1359.8 255.7 L1361.2 252.3 L1371.5 252.3 L1372.9 256.1 L1374.7 264.0 L1377.8 256.1 L1383.3 256.1 L1386.1 264.0 L1388.9 264.0 L1390.9 256.1 L1390.9 327.4 L860.1 327.4 Z" fill="#482f1f"/>
<path d="M860.1 252.6 L861.2 256.1 L866.8 256.1 L868.6 264.0 L880.6 264.0 L882.7 272.0 L884.4 272.0 L886.2 264.0 L891.7 264.0 L894.5 256.1 L896.5 255.7 L898.2 248.2 L899.6 248.5 L901.4 256.1 L908.3 256.1 L909.7 260.9 L911.8 279.6 L913.4 272.7 L915.2 287.5 L929.1 287.5 L930.9 280.0 L932.5 279.6 L933.9 276.2 L935.0 280.0 L938.1 272.0 L939.5 271.3 L941.5 256.1 L945.0 256.1 L946.4 248.5 L948.0 256.1 L950.5 256.1 L951.9 248.5 L953.6 264.0 L956.8 256.1 L960.2 256.1 L962.3 264.0 L973.4 264.0 L976.6 272.0 L978.5 272.0 L980.3 260.2 L981.7 264.0 L983.8 264.4 L986.5 271.7 L990.7 271.7 L992.1 268.5 L994.2 280.0 L1001.1 280.0 L1005.9 260.2 L1009.8 259.8 L1011.2 248.5 L1012.9 259.8 L1017.0 260.2 L1020.1 268.1 L1022.5 267.8 L1024.6 253.3 L1026.7 252.3 L1028.4 253.3 L1030.9 269.9 L1032.9 272.0 L1035.0 264.4 L1039.2 264.0 L1041.2 271.7 L1044.7 271.7 L1046.8 280.0 L1053.0 264.0 L1054.4 263.0 L1055.5 256.1 L1057.2 264.0 L1063.4 264.0 L1065.5 256.1 L1069.6 256.1 L1071.7 262.3 L1075.2 279.6 L1080.4 280.0 L1082.4 287.5 L1085.5 271.7 L1087.6 271.3 L1089.7 267.8 L1093.9 275.5 L1096.6 280.0 L1100.1 280.0 L1102.2 271.7 L1103.5 271.3 L1106.3 260.2 L1108.4 256.1 L1110.9 264.0 L1121.5 264.0 L1123.0 264.0 L1125.1 267.8 L1128.5 268.1 L1131.6 272.0 L1133.8 264.8 L1136.8 264.4 L1140.3 269.9 L1142.7 280.0 L1144.5 272.0 L1148.6 271.7 L1151.4 256.5 L1152.8 264.0 L1156.9 264.4 L1159.3 271.7 L1165.9 272.0 L1168.0 268.5 L1169.4 271.7 L1170.8 256.1 L1172.2 264.0 L1173.5 264.4 L1175.3 256.1 L1178.4 271.7 L1182.5 272.0 L1184.6 264.4 L1190.8 264.0 L1195.0 248.5 L1197.8 256.1 L1199.2 258.2 L1201.9 271.7 L1205.4 272.0 L1206.8 264.4 L1209.5 256.1 L1210.9 256.8 L1213.7 271.7 L1225.5 272.0 L1227.5 268.1 L1233.1 267.8 L1236.5 275.9 L1240.7 275.9 L1242.1 264.4 L1248.3 264.0 L1250.4 256.1 L1251.8 263.7 L1254.5 264.4 L1256.6 272.0 L1258.0 271.7 L1260.1 264.0 L1262.9 260.2 L1265.6 264.0 L1271.2 264.4 L1272.8 248.5 L1274.6 264.0 L1278.1 264.4 L1280.2 271.7 L1291.9 272.0 L1295.4 280.0 L1298.2 287.5 L1300.9 287.5 L1302.7 276.2 L1305.1 275.9 L1307.2 268.1 L1309.2 267.8 L1311.6 275.9 L1314.1 272.0 L1316.9 271.7 L1318.9 264.0 L1320.3 264.0 L1322.4 271.7 L1330.0 272.0 L1332.1 280.0 L1336.2 280.0 L1338.3 272.0 L1340.4 271.7 L1342.1 260.2 L1343.2 267.8 L1344.5 260.2 L1348.7 260.2 L1350.8 275.9 L1354.0 275.9 L1355.6 269.2 L1357.0 256.1 L1359.8 255.7 L1361.2 252.3 L1371.5 252.3 L1372.9 256.1 L1374.7 264.0 L1377.8 256.1 L1383.3 256.1 L1386.1 264.0 L1388.9 264.0 L1390.9 256.1 L1390.9 327.4 L860.1 327.4 Z" fill="url(#g2o)" clip-path="url(#cpb)"/>
<path d="M860.1 256.1 L867.2 256.1 L868.6 249.2 L869.5 248.5 L871.6 240.4 L876.5 240.4 L878.5 232.5 L884.4 232.5 L886.2 216.6 L894.2 216.6 L895.8 223.5 L899.3 231.2 L901.0 232.5 L903.2 240.4 L912.9 240.4 L915.2 248.2 L922.2 248.2 L924.2 232.5 L925.9 232.5 L927.7 240.2 L929.5 240.4 L931.2 248.2 L941.1 248.2 L942.9 256.1 L945.0 263.7 L947.5 258.2 L949.2 259.5 L950.5 256.8 L953.6 256.8 L955.4 249.2 L957.2 254.0 L958.6 248.5 L960.9 248.5 L963.7 256.1 L965.8 248.5 L969.2 248.5 L970.6 251.9 L972.0 248.5 L974.4 248.5 L976.2 256.1 L988.2 256.1 L990.7 248.2 L998.3 248.2 L999.7 240.4 L1001.1 240.2 L1003.9 232.5 L1008.7 232.5 L1009.8 236.0 L1011.5 228.4 L1012.9 240.2 L1015.6 240.4 L1018.4 248.5 L1020.5 256.1 L1026.7 256.1 L1028.1 248.5 L1030.9 248.5 L1033.6 256.1 L1040.5 256.1 L1042.6 248.5 L1047.5 248.5 L1050.2 256.1 L1055.1 256.1 L1057.2 263.7 L1058.5 271.7 L1072.4 271.7 L1074.5 264.0 L1077.2 263.7 L1079.3 256.1 L1092.5 256.1 L1094.5 248.2 L1096.6 248.2 L1098.7 256.1 L1117.4 256.1 L1119.5 248.5 L1121.5 248.2 L1123.0 240.4 L1126.5 240.2 L1128.3 232.5 L1130.2 232.5 L1132.0 248.2 L1135.2 248.2 L1136.8 240.4 L1139.6 240.4 L1142.1 232.5 L1147.9 232.5 L1150.7 240.2 L1156.2 240.4 L1158.3 248.2 L1161.1 248.2 L1162.5 240.4 L1165.9 240.4 L1168.0 232.5 L1177.0 232.5 L1179.1 240.2 L1181.2 240.8 L1182.5 248.2 L1184.6 240.4 L1186.0 240.2 L1187.4 232.5 L1188.8 240.2 L1192.2 240.4 L1194.3 244.3 L1196.4 248.2 L1203.3 248.2 L1205.0 240.4 L1207.5 240.2 L1209.1 232.5 L1215.8 232.5 L1218.5 248.2 L1224.1 248.2 L1226.2 240.4 L1227.8 236.3 L1229.6 240.2 L1237.2 240.4 L1240.0 248.2 L1241.4 252.3 L1243.5 248.5 L1258.0 248.2 L1261.5 256.1 L1263.5 258.2 L1264.5 264.0 L1266.3 263.7 L1267.7 256.1 L1278.1 256.1 L1279.7 248.5 L1283.6 248.2 L1285.7 240.4 L1287.1 244.3 L1288.5 240.4 L1291.2 240.2 L1293.6 232.5 L1298.9 232.5 L1300.9 240.2 L1302.7 232.5 L1306.5 232.5 L1308.5 240.4 L1321.3 240.4 L1323.1 232.5 L1324.5 232.5 L1326.5 236.3 L1327.9 236.7 L1329.3 248.2 L1331.4 248.2 L1332.8 240.4 L1335.5 247.8 L1337.6 248.5 L1339.3 256.1 L1357.0 256.1 L1358.4 264.0 L1362.5 264.0 L1364.6 256.1 L1366.0 252.3 L1367.0 248.5 L1368.8 256.1 L1371.5 256.1 L1373.3 248.5 L1376.4 248.5 L1377.8 256.1 L1378.9 248.5 L1380.3 254.7 L1381.7 252.3 L1383.3 256.1 L1390.9 256.1" fill="none" stroke="#a6d3fc" stroke-width="1.55" stroke-linejoin="round"/>
<path d="M860.1 252.6 L861.2 256.1 L866.8 256.1 L868.6 264.0 L880.6 264.0 L882.7 272.0 L884.4 272.0 L886.2 264.0 L891.7 264.0 L894.5 256.1 L896.5 255.7 L898.2 248.2 L899.6 248.5 L901.4 256.1 L908.3 256.1 L909.7 260.9 L911.8 279.6 L913.4 272.7 L915.2 287.5 L929.1 287.5 L930.9 280.0 L932.5 279.6 L933.9 276.2 L935.0 280.0 L938.1 272.0 L939.5 271.3 L941.5 256.1 L945.0 256.1 L946.4 248.5 L948.0 256.1 L950.5 256.1 L951.9 248.5 L953.6 264.0 L956.8 256.1 L960.2 256.1 L962.3 264.0 L973.4 264.0 L976.6 272.0 L978.5 272.0 L980.3 260.2 L981.7 264.0 L983.8 264.4 L986.5 271.7 L990.7 271.7 L992.1 268.5 L994.2 280.0 L1001.1 280.0 L1005.9 260.2 L1009.8 259.8 L1011.2 248.5 L1012.9 259.8 L1017.0 260.2 L1020.1 268.1 L1022.5 267.8 L1024.6 253.3 L1026.7 252.3 L1028.4 253.3 L1030.9 269.9 L1032.9 272.0 L1035.0 264.4 L1039.2 264.0 L1041.2 271.7 L1044.7 271.7 L1046.8 280.0 L1053.0 264.0 L1054.4 263.0 L1055.5 256.1 L1057.2 264.0 L1063.4 264.0 L1065.5 256.1 L1069.6 256.1 L1071.7 262.3 L1075.2 279.6 L1080.4 280.0 L1082.4 287.5 L1085.5 271.7 L1087.6 271.3 L1089.7 267.8 L1093.9 275.5 L1096.6 280.0 L1100.1 280.0 L1102.2 271.7 L1103.5 271.3 L1106.3 260.2 L1108.4 256.1 L1110.9 264.0 L1121.5 264.0 L1123.0 264.0 L1125.1 267.8 L1128.5 268.1 L1131.6 272.0 L1133.8 264.8 L1136.8 264.4 L1140.3 269.9 L1142.7 280.0 L1144.5 272.0 L1148.6 271.7 L1151.4 256.5 L1152.8 264.0 L1156.9 264.4 L1159.3 271.7 L1165.9 272.0 L1168.0 268.5 L1169.4 271.7 L1170.8 256.1 L1172.2 264.0 L1173.5 264.4 L1175.3 256.1 L1178.4 271.7 L1182.5 272.0 L1184.6 264.4 L1190.8 264.0 L1195.0 248.5 L1197.8 256.1 L1199.2 258.2 L1201.9 271.7 L1205.4 272.0 L1206.8 264.4 L1209.5 256.1 L1210.9 256.8 L1213.7 271.7 L1225.5 272.0 L1227.5 268.1 L1233.1 267.8 L1236.5 275.9 L1240.7 275.9 L1242.1 264.4 L1248.3 264.0 L1250.4 256.1 L1251.8 263.7 L1254.5 264.4 L1256.6 272.0 L1258.0 271.7 L1260.1 264.0 L1262.9 260.2 L1265.6 264.0 L1271.2 264.4 L1272.8 248.5 L1274.6 264.0 L1278.1 264.4 L1280.2 271.7 L1291.9 272.0 L1295.4 280.0 L1298.2 287.5 L1300.9 287.5 L1302.7 276.2 L1305.1 275.9 L1307.2 268.1 L1309.2 267.8 L1311.6 275.9 L1314.1 272.0 L1316.9 271.7 L1318.9 264.0 L1320.3 264.0 L1322.4 271.7 L1330.0 272.0 L1332.1 280.0 L1336.2 280.0 L1338.3 272.0 L1340.4 271.7 L1342.1 260.2 L1343.2 267.8 L1344.5 260.2 L1348.7 260.2 L1350.8 275.9 L1354.0 275.9 L1355.6 269.2 L1357.0 256.1 L1359.8 255.7 L1361.2 252.3 L1371.5 252.3 L1372.9 256.1 L1374.7 264.0 L1377.8 256.1 L1383.3 256.1 L1386.1 264.0 L1388.9 264.0 L1390.9 256.1" fill="none" stroke="#f0902a" stroke-width="1.55" stroke-linejoin="round"/>
<path d="M860.1 319.800H877.2 L879.2 315.600 H899.3 L901.4 319.800 H1390.900 V327.400 H860.1 Z" fill="#6a4030" fill-opacity="0.55"/>
<path d="M860.1 319.800H877.2 L879.2 315.600 H899.3 L901.4 319.800 H1390.900" fill="none" stroke="#c9721f" stroke-width="1.700"/>
<path d="M897.9 323.700H1028.3" stroke="#9c9a50" stroke-width="1.700"/>
<path d="M1067.6 323.700H1107.5" stroke="#9c9a50" stroke-width="1.700"/>
<path d="M1132.0 323.700H1203.4" stroke="#9c9a50" stroke-width="1.700"/>
<path d="M1231.5 323.700H1297.4" stroke="#9c9a50" stroke-width="1.700"/>
<path d="M1324.4 323.700H1390.9" stroke="#9c9a50" stroke-width="1.700"/>
<path d="M1435.0 244.7 L1435.4 246.3 L1444.9 246.3 L1446.5 240.0 L1451.8 240.0 L1453.4 231.7 L1455.5 234.6 L1457.3 240.6 L1459.7 240.6 L1461.5 222.9 L1467.0 222.9 L1468.7 217.2 L1470.3 222.9 L1472.1 220.1 L1474.2 222.9 L1477.7 237.2 L1483.2 237.2 L1485.0 242.9 L1486.7 254.2 L1488.7 251.7 L1490.5 265.9 L1497.1 265.9 L1499.1 255.1 L1500.8 255.1 L1502.6 260.6 L1507.2 260.6 L1508.5 257.9 L1509.5 260.6 L1512.7 255.1 L1514.4 255.1 L1516.0 243.4 L1518.5 249.2 L1519.9 254.2 L1521.3 246.2 L1522.9 247.6 L1524.7 251.7 L1526.5 249.2 L1527.5 243.4 L1528.5 254.2 L1529.9 247.6 L1531.7 249.2 L1533.1 242.9 L1535.4 242.9 L1537.2 249.2 L1539.0 255.1 L1540.7 249.2 L1544.8 249.2 L1545.9 251.7 L1547.3 249.2 L1549.0 251.7 L1551.1 260.6 L1553.4 260.6 L1555.2 252.2 L1556.6 255.1 L1558.4 255.1 L1561.4 260.6 L1563.5 260.6 L1565.6 255.1 L1567.0 252.2 L1568.8 260.6 L1573.9 260.6 L1575.3 255.1 L1576.7 255.1 L1580.1 237.6 L1581.5 234.2 L1584.3 234.2 L1585.0 237.6 L1586.4 223.4 L1588.0 240.1 L1591.2 240.1 L1593.3 246.7 L1595.0 257.6 L1597.4 257.6 L1599.9 246.7 L1601.6 246.7 L1603.0 240.6 L1604.6 238.8 L1606.4 252.2 L1608.5 257.7 L1610.6 252.2 L1614.8 252.2 L1615.7 257.7 L1617.1 252.2 L1620.7 252.2 L1621.7 257.2 L1623.1 255.0 L1625.1 258.0 L1626.5 257.7 L1628.2 252.2 L1631.0 252.2 L1633.2 263.0 L1634.8 263.9 L1638.3 263.9 L1640.1 257.7 L1644.2 260.6 L1646.6 266.7 L1647.6 269.2 L1648.7 266.7 L1651.2 272.6 L1652.8 272.6 L1654.5 266.7 L1655.9 266.7 L1657.3 272.6 L1660.4 263.4 L1661.8 260.6 L1663.6 260.6 L1664.6 257.9 L1666.0 260.6 L1668.1 260.6 L1669.4 257.9 L1671.1 260.6 L1673.6 266.7 L1675.0 266.7 L1677.1 260.6 L1677.8 260.9 L1679.8 254.2 L1682.6 249.2 L1684.0 246.3 L1685.8 252.2 L1692.3 252.2 L1694.4 246.3 L1696.4 246.3 L1697.9 243.3 L1700.0 243.8 L1701.8 240.5 L1703.2 237.7 L1705.1 238.3 L1706.5 246.3 L1707.6 255.1 L1709.0 250.1 L1710.6 249.2 L1712.4 243.4 L1714.2 243.4 L1715.6 246.2 L1716.6 244.2 L1717.6 249.2 L1718.9 243.4 L1722.8 243.4 L1724.5 246.2 L1725.6 243.4 L1726.7 237.6 L1728.1 242.9 L1731.1 243.4 L1733.2 249.2 L1734.6 255.1 L1736.4 255.1 L1737.4 249.2 L1741.5 249.2 L1743.3 240.6 L1744.7 241.7 L1745.7 231.7 L1747.5 237.6 L1748.9 237.6 L1750.2 231.7 L1751.6 234.2 L1753.3 243.4 L1754.0 249.2 L1755.8 249.6 L1757.4 255.1 L1759.1 245.9 L1760.5 243.4 L1762.3 237.6 L1764.1 243.4 L1766.4 243.4 L1768.2 237.6 L1770.6 237.6 L1772.7 243.4 L1774.3 243.4 L1776.1 252.6 L1777.5 255.6 L1778.9 255.1 L1780.7 243.8 L1781.7 240.5 L1783.1 240.0 L1784.0 229.7 L1785.8 228.8 L1787.6 234.7 L1788.6 239.7 L1790.4 240.5 L1792.1 246.3 L1793.4 252.2 L1799.7 252.2 L1801.5 243.3 L1802.4 240.0 L1804.5 243.3 L1808.0 246.2 L1810.7 251.7 L1812.1 252.6 L1814.9 257.9 L1817.3 250.9 L1818.6 249.2 L1823.9 249.2 L1825.3 243.4 L1827.0 249.2 L1829.7 249.2 L1831.1 255.1 L1832.9 255.1 L1834.3 252.2 L1835.3 255.1 L1837.1 252.2 L1838.9 257.9 L1840.2 260.9 L1841.6 260.6 L1843.0 255.1 L1846.8 255.1 L1848.1 243.4 L1849.5 255.1 L1859.2 255.1 L1861.0 249.2 L1862.4 251.7 L1864.1 249.2 L1867.1 248.9 L1868.5 246.7 L1870.3 249.2 L1871.7 249.6 L1873.1 255.1 L1874.4 253.0 L1875.8 258.0 L1877.6 243.8 L1880.0 243.0 L1881.4 238.3 L1882.8 243.0 L1884.6 243.8 L1886.5 249.3 L1888.7 246.7 L1891.8 246.3 L1893.4 240.5 L1895.2 240.0 L1896.6 246.0 L1897.6 240.5 L1899.4 242.9 L1900.8 246.2 L1902.6 246.7 L1904.2 255.1 L1905.9 260.9 L1907.3 255.6 L1909.1 260.9 L1910.0 255.9 L1911.8 260.9 L1913.2 255.6 L1914.6 260.9 L1916.7 252.2 L1918.1 257.6 L1919.4 251.7 L1923.3 251.7 L1925.0 255.1 L1925.7 263.4 L1929.4 263.4 L1931.9 250.1 L1933.6 255.1 L1935.0 255.1 L1936.3 252.2 L1938.1 251.7 L1939.9 246.2 L1942.3 240.9 L1944.1 246.2 L1946.4 245.9 L1947.8 243.4 L1949.6 249.2 L1951.0 246.2 L1952.4 248.9 L1953.4 243.4 L1955.2 248.9 L1956.6 246.2 L1958.9 249.2 L1961.7 255.1 L1963.8 255.1 L1965.4 249.6 L1965.4 351.2 L1435.0 351.2 Z" fill="url(#g3)"/>
<path d="M1435.0 244.7 L1435.4 246.3 L1444.9 246.3 L1446.5 240.0 L1451.8 240.0 L1453.4 231.7 L1455.5 234.6 L1457.3 240.6 L1459.7 240.6 L1461.5 222.9 L1467.0 222.9 L1468.7 217.2 L1470.3 222.9 L1472.1 220.1 L1474.2 222.9 L1477.7 237.2 L1483.2 237.2 L1485.0 242.9 L1486.7 254.2 L1488.7 251.7 L1490.5 265.9 L1497.1 265.9 L1499.1 255.1 L1500.8 255.1 L1502.6 260.6 L1507.2 260.6 L1508.5 257.9 L1509.5 260.6 L1512.7 255.1 L1514.4 255.1 L1516.0 243.4 L1518.5 249.2 L1519.9 254.2 L1521.3 246.2 L1522.9 247.6 L1524.7 251.7 L1526.5 249.2 L1527.5 243.4 L1528.5 254.2 L1529.9 247.6 L1531.7 249.2 L1533.1 242.9 L1535.4 242.9 L1537.2 249.2 L1539.0 255.1 L1540.7 249.2 L1544.8 249.2 L1545.9 251.7 L1547.3 249.2 L1549.0 251.7 L1551.1 260.6 L1553.4 260.6 L1555.2 252.2 L1556.6 255.1 L1558.4 255.1 L1561.4 260.6 L1563.5 260.6 L1565.6 255.1 L1567.0 252.2 L1568.8 260.6 L1573.9 260.6 L1575.3 255.1 L1576.7 255.1 L1580.1 237.6 L1581.5 234.2 L1584.3 234.2 L1585.0 237.6 L1586.4 223.4 L1588.0 240.1 L1591.2 240.1 L1593.3 246.7 L1595.0 257.6 L1597.4 257.6 L1599.9 246.7 L1601.6 246.7 L1603.0 240.6 L1604.6 238.8 L1606.4 252.2 L1608.5 257.7 L1610.6 252.2 L1614.8 252.2 L1615.7 257.7 L1617.1 252.2 L1620.7 252.2 L1621.7 257.2 L1623.1 255.0 L1625.1 258.0 L1626.5 257.7 L1628.2 252.2 L1631.0 252.2 L1633.2 263.0 L1634.8 263.9 L1638.3 263.9 L1640.1 257.7 L1644.2 260.6 L1646.6 266.7 L1647.6 269.2 L1648.7 266.7 L1651.2 272.6 L1652.8 272.6 L1654.5 266.7 L1655.9 266.7 L1657.3 272.6 L1660.4 263.4 L1661.8 260.6 L1663.6 260.6 L1664.6 257.9 L1666.0 260.6 L1668.1 260.6 L1669.4 257.9 L1671.1 260.6 L1673.6 266.7 L1675.0 266.7 L1677.1 260.6 L1677.8 260.9 L1679.8 254.2 L1682.6 249.2 L1684.0 246.3 L1685.8 252.2 L1692.3 252.2 L1694.4 246.3 L1696.4 246.3 L1697.9 243.3 L1700.0 243.8 L1701.8 240.5 L1703.2 237.7 L1705.1 238.3 L1706.5 246.3 L1707.6 255.1 L1709.0 250.1 L1710.6 249.2 L1712.4 243.4 L1714.2 243.4 L1715.6 246.2 L1716.6 244.2 L1717.6 249.2 L1718.9 243.4 L1722.8 243.4 L1724.5 246.2 L1725.6 243.4 L1726.7 237.6 L1728.1 242.9 L1731.1 243.4 L1733.2 249.2 L1734.6 255.1 L1736.4 255.1 L1737.4 249.2 L1741.5 249.2 L1743.3 240.6 L1744.7 241.7 L1745.7 231.7 L1747.5 237.6 L1748.9 237.6 L1750.2 231.7 L1751.6 234.2 L1753.3 243.4 L1754.0 249.2 L1755.8 249.6 L1757.4 255.1 L1759.1 245.9 L1760.5 243.4 L1762.3 237.6 L1764.1 243.4 L1766.4 243.4 L1768.2 237.6 L1770.6 237.6 L1772.7 243.4 L1774.3 243.4 L1776.1 252.6 L1777.5 255.6 L1778.9 255.1 L1780.7 243.8 L1781.7 240.5 L1783.1 240.0 L1784.0 229.7 L1785.8 228.8 L1787.6 234.7 L1788.6 239.7 L1790.4 240.5 L1792.1 246.3 L1793.4 252.2 L1799.7 252.2 L1801.5 243.3 L1802.4 240.0 L1804.5 243.3 L1808.0 246.2 L1810.7 251.7 L1812.1 252.6 L1814.9 257.9 L1817.3 250.9 L1818.6 249.2 L1823.9 249.2 L1825.3 243.4 L1827.0 249.2 L1829.7 249.2 L1831.1 255.1 L1832.9 255.1 L1834.3 252.2 L1835.3 255.1 L1837.1 252.2 L1838.9 257.9 L1840.2 260.9 L1841.6 260.6 L1843.0 255.1 L1846.8 255.1 L1848.1 243.4 L1849.5 255.1 L1859.2 255.1 L1861.0 249.2 L1862.4 251.7 L1864.1 249.2 L1867.1 248.9 L1868.5 246.7 L1870.3 249.2 L1871.7 249.6 L1873.1 255.1 L1874.4 253.0 L1875.8 258.0 L1877.6 243.8 L1880.0 243.0 L1881.4 238.3 L1882.8 243.0 L1884.6 243.8 L1886.5 249.3 L1888.7 246.7 L1891.8 246.3 L1893.4 240.5 L1895.2 240.0 L1896.6 246.0 L1897.6 240.5 L1899.4 242.9 L1900.8 246.2 L1902.6 246.7 L1904.2 255.1 L1905.9 260.9 L1907.3 255.6 L1909.1 260.9 L1910.0 255.9 L1911.8 260.9 L1913.2 255.6 L1914.6 260.9 L1916.7 252.2 L1918.1 257.6 L1919.4 251.7 L1923.3 251.7 L1925.0 255.1 L1925.7 263.4 L1929.4 263.4 L1931.9 250.1 L1933.6 255.1 L1935.0 255.1 L1936.3 252.2 L1938.1 251.7 L1939.9 246.2 L1942.3 240.9 L1944.1 246.2 L1946.4 245.9 L1947.8 243.4 L1949.6 249.2 L1951.0 246.2 L1952.4 248.9 L1953.4 243.4 L1955.2 248.9 L1956.6 246.2 L1958.9 249.2 L1961.7 255.1 L1963.8 255.1 L1965.4 249.6" fill="none" stroke="#ececf2" stroke-width="1.55" stroke-linejoin="round"/>
<path d="M1435.0 342.5 L1452.9 342.5 L1454.9 339.6 L1471.0 339.6 L1473.4 337.0 L1476.0 339.6 L1602.8 339.6 L1604.8 342.5 L1641.1 342.5 L1643.1 339.6 L1682.2 339.6 L1684.2 342.5 L1706.2 342.5 L1708.2 339.6 L1778.1 339.6 L1780.1 342.5 L1805.0 342.5 L1807.0 339.6 L1872.5 339.6 L1874.5 342.5 L1898.0 342.5 L1900.0 339.6 L1965.8 339.6 L1965.8 351.2 L1435.0 351.2 Z" fill="#5a3032"/>
<path d="M1435.0 342.5 L1452.9 342.5 L1454.9 339.6 L1471.0 339.6 L1473.4 337.0 L1476.0 339.6 L1602.8 339.6 L1604.8 342.5 L1641.1 342.5 L1643.1 339.6 L1682.2 339.6 L1684.2 342.5 L1706.2 342.5 L1708.2 339.6 L1778.1 339.6 L1780.1 342.5 L1805.0 342.5 L1807.0 339.6 L1872.5 339.6 L1874.5 342.5 L1898.0 342.5 L1900.0 339.6 L1965.8 339.6" fill="none" stroke="#dd3c0d" stroke-width="1.700" stroke-linejoin="round"/>
</svg>
<div class="t" style="right:1718.4px;top:208.1px;font-size:9.6px;color:#c0c1cf;letter-spacing:0.2px;-webkit-text-stroke:0.2px #c0c1cf">50</div>
<div class="t" style="right:1718.4px;top:232.1px;font-size:9.6px;color:#c0c1cf;letter-spacing:0.2px;-webkit-text-stroke:0.2px #c0c1cf">40</div>
<div class="t" style="right:1718.4px;top:256.1px;font-size:9.6px;color:#c0c1cf;letter-spacing:0.2px;-webkit-text-stroke:0.2px #c0c1cf">30</div>
<div class="t" style="right:1718.4px;top:280.1px;font-size:9.6px;color:#c0c1cf;letter-spacing:0.2px;-webkit-text-stroke:0.2px #c0c1cf">20</div>
<div class="t" style="right:1718.4px;top:304.1px;font-size:9.6px;color:#c0c1cf;letter-spacing:0.2px;-webkit-text-stroke:0.2px #c0c1cf">10</div>
<div class="t" style="right:1718.4px;top:329.0px;font-size:9.6px;color:#c0c1cf;letter-spacing:0.2px;-webkit-text-stroke:0.2px #c0c1cf">0</div>
<div class="t" style="left:287.6px;top:340.5px;width:40px;text-align:center;font-size:9.6px;color:#c0c1cf;letter-spacing:-0.12px;-webkit-text-stroke:0.2px #c0c1cf">10:30</div>
<div class="vl" style="left:307.1px;top:333.5px;height:3px;background:#2d2f35"></div>
<div class="t" style="left:331.8px;top:340.5px;width:40px;text-align:center;font-size:9.6px;color:#c0c1cf;letter-spacing:-0.12px;-webkit-text-stroke:0.2px #c0c1cf">11:00</div>
<div class="vl" style="left:351.3px;top:333.5px;height:3px;background:#2d2f35"></div>
<div class="t" style="left:376.0px;top:340.5px;width:40px;text-align:center;font-size:9.6px;color:#c0c1cf;letter-spacing:-0.12px;-webkit-text-stroke:0.2px #c0c1cf">11:30</div>
<div class="vl" style="left:395.5px;top:333.5px;height:3px;background:#2d2f35"></div>
<div class="t" style="left:420.3px;top:340.5px;width:40px;text-align:center;font-size:9.6px;color:#c0c1cf;letter-spacing:-0.12px;-webkit-text-stroke:0.2px #c0c1cf">12:00</div>
<div class="vl" style="left:439.8px;top:333.5px;height:3px;background:#2d2f35"></div>
<div class="t" style="left:464.5px;top:340.5px;width:40px;text-align:center;font-size:9.6px;color:#c0c1cf;letter-spacing:-0.12px;-webkit-text-stroke:0.2px #c0c1cf">12:30</div>
<div class="vl" style="left:484.0px;top:333.5px;height:3px;background:#2d2f35"></div>
<div class="t" style="left:508.7px;top:340.5px;width:40px;text-align:center;font-size:9.6px;color:#c0c1cf;letter-spacing:-0.12px;-webkit-text-stroke:0.2px #c0c1cf">13:00</div>
<div class="vl" style="left:528.2px;top:333.5px;height:3px;background:#2d2f35"></div>
<div class="t" style="left:552.9px;top:340.5px;width:40px;text-align:center;font-size:9.6px;color:#c0c1cf;letter-spacing:-0.12px;-webkit-text-stroke:0.2px #c0c1cf">13:30</div>
<div class="vl" style="left:572.4px;top:333.5px;height:3px;background:#2d2f35"></div>
<div class="t" style="left:597.1px;top:340.5px;width:40px;text-align:center;font-size:9.6px;color:#c0c1cf;letter-spacing:-0.12px;-webkit-text-stroke:0.2px #c0c1cf">14:00</div>
<div class="vl" style="left:616.6px;top:333.5px;height:3px;background:#2d2f35"></div>
<div class="t" style="left:641.4px;top:340.5px;width:40px;text-align:center;font-size:9.6px;color:#c0c1cf;letter-spacing:-0.12px;-webkit-text-stroke:0.2px #c0c1cf">14:30</div>
<div class="vl" style="left:660.9px;top:333.5px;height:3px;background:#2d2f35"></div>
<div class="t" style="left:685.6px;top:340.5px;width:40px;text-align:center;font-size:9.6px;color:#c0c1cf;letter-spacing:-0.12px;-webkit-text-stroke:0.2px #c0c1cf">15:00</div>
<div class="vl" style="left:705.1px;top:333.5px;height:3px;background:#2d2f35"></div>
<div class="t" style="left:729.8px;top:340.5px;width:40px;text-align:center;font-size:9.6px;color:#c0c1cf;letter-spacing:-0.12px;-webkit-text-stroke:0.2px #c0c1cf">15:30</div>
<div class="vl" style="left:749.3px;top:333.5px;height:3px;background:#2d2f35"></div>
<div class="t" style="left:774.0px;top:340.5px;width:40px;text-align:center;font-size:9.6px;color:#c0c1cf;letter-spacing:-0.12px;-webkit-text-stroke:0.2px #c0c1cf">16:00</div>
<div class="vl" style="left:793.5px;top:333.5px;height:3px;background:#2d2f35"></div>
<div class="t" style="left:289.0px;top:353.3px;font-size:9.6px;color:#6e9fff;letter-spacing:0px;-webkit-text-stroke:0.3px #6e9fff">Name</div>
<div class="t" style="right:1190.6px;top:353.3px;font-size:9.6px;color:#6e9fff;letter-spacing:0px;-webkit-text-stroke:0.3px #6e9fff">Last</div>
<svg style="left:809.9px;top:356.8px" width="6" height="4" viewBox="0 0 6 4"><path d="M0.800 0.800L3 3L5.200 0.800" stroke="#6e9fff" stroke-width="1" fill="none"/></svg>
<div class="hl" style="left:266.5px;top:367.0px;width:554.8px;background:#2a2c32"></div>
<div class="hl" style="left:266.5px;top:384.9px;width:554.8px;background:#2a2c32"></div>
<div class="hl" style="left:266.5px;top:403.0px;width:554.8px;background:#2a2c32"></div>
<div class="hl" style="left:266.5px;top:421.0px;width:554.8px;background:#2a2c32"></div>
<div class="abs" style="left:272.4px;top:374.9px;width:10.600px;height:3px;border-radius:1.5px;background:#8ab8ff"></div>
<div class="t pri" style="left:289.0px;top:371.2px;font-size:9.6px;letter-spacing:0.22px">se-demo-cluster</div>
<div class="t pri" style="right:1183.1px;top:371.2px;font-size:9.6px;letter-spacing:0.3px">38</div>
<div class="abs" style="left:272.4px;top:392.5px;width:10.600px;height:3px;border-radius:1.5px;background:#73bf69"></div>
<div class="t pri" style="left:289.0px;top:388.8px;font-size:9.6px;letter-spacing:0.22px">atp-demo</div>
<div class="t pri" style="right:1183.1px;top:388.8px;font-size:9.6px;letter-spacing:0.3px">1</div>
<div class="abs" style="left:272.4px;top:410.9px;width:10.600px;height:3px;border-radius:1.5px;background:#f2cc0c"></div>
<div class="t pri" style="left:289.0px;top:407.2px;font-size:9.6px;letter-spacing:0.22px">otel-demo</div>
<div class="t pri" style="right:1183.1px;top:407.2px;font-size:9.6px;letter-spacing:0.3px">1</div>
<div class="abs" style="left:821px;top:422px;width:1px;height:1px;background:#6d6e7a"></div>
<div class="t" style="right:1143.0px;top:202.2px;font-size:9.6px;color:#c0c1cf;letter-spacing:0.2px;-webkit-text-stroke:0.2px #c0c1cf">30</div>
<div class="t" style="right:1143.0px;top:242.1px;font-size:9.6px;color:#c0c1cf;letter-spacing:0.2px;-webkit-text-stroke:0.2px #c0c1cf">20</div>
<div class="t" style="right:1143.0px;top:282.0px;font-size:9.6px;color:#c0c1cf;letter-spacing:0.2px;-webkit-text-stroke:0.2px #c0c1cf">10</div>
<div class="t" style="right:1143.0px;top:321.8px;font-size:9.6px;color:#c0c1cf;letter-spacing:0.2px;-webkit-text-stroke:0.2px #c0c1cf">0</div>
<div class="t" style="left:862.5px;top:333.4px;width:40px;text-align:center;font-size:9.6px;color:#c0c1cf;letter-spacing:-0.12px;-webkit-text-stroke:0.2px #c0c1cf">10:30</div>
<div class="vl" style="left:882.0px;top:328.0px;height:3px;background:#2d2f35"></div>
<div class="t" style="left:906.7px;top:333.4px;width:40px;text-align:center;font-size:9.6px;color:#c0c1cf;letter-spacing:-0.12px;-webkit-text-stroke:0.2px #c0c1cf">11:00</div>
<div class="vl" style="left:926.2px;top:328.0px;height:3px;background:#2d2f35"></div>
<div class="t" style="left:950.9px;top:333.4px;width:40px;text-align:center;font-size:9.6px;color:#c0c1cf;letter-spacing:-0.12px;-webkit-text-stroke:0.2px #c0c1cf">11:30</div>
<div class="vl" style="left:970.4px;top:328.0px;height:3px;background:#2d2f35"></div>
<div class="t" style="left:995.2px;top:333.4px;width:40px;text-align:center;font-size:9.6px;color:#c0c1cf;letter-spacing:-0.12px;-webkit-text-stroke:0.2px #c0c1cf">12:00</div>
<div class="vl" style="left:1014.7px;top:328.0px;height:3px;background:#2d2f35"></div>
<div class="t" style="left:1039.4px;top:333.4px;width:40px;text-align:center;font-size:9.6px;color:#c0c1cf;letter-spacing:-0.12px;-webkit-text-stroke:0.2px #c0c1cf">12:30</div>
<div class="vl" style="left:1058.9px;top:328.0px;height:3px;background:#2d2f35"></div>
<div class="t" style="left:1083.6px;top:333.4px;width:40px;text-align:center;font-size:9.6px;color:#c0c1cf;letter-spacing:-0.12px;-webkit-text-stroke:0.2px #c0c1cf">13:00</div>
<div class="vl" style="left:1103.1px;top:328.0px;height:3px;background:#2d2f35"></div>
<div class="t" style="left:1127.8px;top:333.4px;width:40px;text-align:center;font-size:9.6px;color:#c0c1cf;letter-spacing:-0.12px;-webkit-text-stroke:0.2px #c0c1cf">13:30</div>
<div class="vl" style="left:1147.3px;top:328.0px;height:3px;background:#2d2f35"></div>
<div class="t" style="left:1172.0px;top:333.4px;width:40px;text-align:center;font-size:9.6px;color:#c0c1cf;letter-spacing:-0.12px;-webkit-text-stroke:0.2px #c0c1cf">14:00</div>
<div class="vl" style="left:1191.5px;top:328.0px;height:3px;background:#2d2f35"></div>
<div class="t" style="left:1216.3px;top:333.4px;width:40px;text-align:center;font-size:9.6px;color:#c0c1cf;letter-spacing:-0.12px;-webkit-text-stroke:0.2px #c0c1cf">14:30</div>
<div class="vl" style="left:1235.8px;top:328.0px;height:3px;background:#2d2f35"></div>
<div class="t" style="left:1260.5px;top:333.4px;width:40px;text-align:center;font-size:9.6px;color:#c0c1cf;letter-spacing:-0.12px;-webkit-text-stroke:0.2px #c0c1cf">15:00</div>
<div class="vl" style="left:1280.0px;top:328.0px;height:3px;background:#2d2f35"></div>
<div class="t" style="left:1304.7px;top:333.4px;width:40px;text-align:center;font-size:9.6px;color:#c0c1cf;letter-spacing:-0.12px;-webkit-text-stroke:0.2px #c0c1cf">15:30</div>
<div class="vl" style="left:1324.2px;top:328.0px;height:3px;background:#2d2f35"></div>
<div class="t" style="left:1348.9px;top:333.4px;width:40px;text-align:center;font-size:9.6px;color:#c0c1cf;letter-spacing:-0.12px;-webkit-text-stroke:0.2px #c0c1cf">16:00</div>
<div class="vl" style="left:1368.4px;top:328.0px;height:3px;background:#2d2f35"></div>
<div class="t" style="left:863.9px;top:346.3px;font-size:9.6px;color:#6e9fff;letter-spacing:0px;-webkit-text-stroke:0.3px #6e9fff">Name</div>
<div class="t" style="right:615.7px;top:346.3px;font-size:9.6px;color:#6e9fff;letter-spacing:0px;-webkit-text-stroke:0.3px #6e9fff">Last</div>
<svg style="left:1384.8px;top:349.8px" width="6" height="4" viewBox="0 0 6 4"><path d="M0.800 0.800L3 3L5.200 0.800" stroke="#6e9fff" stroke-width="1" fill="none"/></svg>
<div class="hl" style="left:841.3px;top:360.2px;width:554.9px;background:#2a2c32"></div>
<div class="hl" style="left:841.3px;top:378.0px;width:554.9px;background:#2a2c32"></div>
<div class="hl" style="left:841.3px;top:396.1px;width:554.9px;background:#2a2c32"></div>
<div class="hl" style="left:841.3px;top:414.0px;width:554.9px;background:#2a2c32"></div>
<div class="abs" style="left:847.2px;top:368.5px;width:10.600px;height:3px;border-radius:1.5px;background:#8ab8ff"></div>
<div class="t pri" style="left:863.9px;top:364.8px;font-size:9.6px;letter-spacing:0.22px">development</div>
<div class="t pri" style="right:608.2px;top:364.8px;font-size:9.6px;letter-spacing:0.3px">18</div>
<div class="abs" style="left:847.2px;top:386.1px;width:10.600px;height:3px;border-radius:1.5px;background:#ff9830"></div>
<div class="t pri" style="left:863.9px;top:382.4px;font-size:9.6px;letter-spacing:0.22px">production</div>
<div class="t pri" style="right:608.2px;top:382.4px;font-size:9.6px;letter-spacing:0.3px">18</div>
<div class="abs" style="left:847.2px;top:403.7px;width:10.600px;height:3px;border-radius:1.5px;background:#f2cc0c"></div>
<div class="t pri" style="left:863.9px;top:400.0px;font-size:9.6px;letter-spacing:0.22px">broken</div>
<div class="t pri" style="right:608.2px;top:400.0px;font-size:9.6px;letter-spacing:0.3px">2</div>
<div class="abs" style="left:841px;top:415px;width:556px;height:7.500px;overflow:hidden"><div class="t pri" style="left:22.900px;top:5.500px;font-size:9.6px;letter-spacing:0.15px">elasticsearch</div><div class="t pri" style="right:5.500px;top:5.500px;font-size:9.6px">1</div></div>
<div class="t" style="right:568.3px;top:200.6px;font-size:9.6px;color:#c0c1cf;letter-spacing:0.2px;-webkit-text-stroke:0.2px #c0c1cf">50</div>
<div class="t" style="right:568.3px;top:229.9px;font-size:9.6px;color:#c0c1cf;letter-spacing:0.2px;-webkit-text-stroke:0.2px #c0c1cf">40</div>
<div class="t" style="right:568.3px;top:258.7px;font-size:9.6px;color:#c0c1cf;letter-spacing:0.2px;-webkit-text-stroke:0.2px #c0c1cf">30</div>
<div class="t" style="right:568.3px;top:287.4px;font-size:9.6px;color:#c0c1cf;letter-spacing:0.2px;-webkit-text-stroke:0.2px #c0c1cf">20</div>
<div class="t" style="right:568.3px;top:316.6px;font-size:9.6px;color:#c0c1cf;letter-spacing:0.2px;-webkit-text-stroke:0.2px #c0c1cf">10</div>
<div class="t" style="right:568.3px;top:345.2px;font-size:9.6px;color:#c0c1cf;letter-spacing:0.2px;-webkit-text-stroke:0.2px #c0c1cf">0</div>
<div class="t" style="left:1437.5px;top:357.1px;width:40px;text-align:center;font-size:9.6px;color:#c0c1cf;letter-spacing:-0.12px;-webkit-text-stroke:0.2px #c0c1cf">10:30</div>
<div class="vl" style="left:1457.0px;top:352.0px;height:3px;background:#2d2f35"></div>
<div class="t" style="left:1481.7px;top:357.1px;width:40px;text-align:center;font-size:9.6px;color:#c0c1cf;letter-spacing:-0.12px;-webkit-text-stroke:0.2px #c0c1cf">11:00</div>
<div class="vl" style="left:1501.2px;top:352.0px;height:3px;background:#2d2f35"></div>
<div class="t" style="left:1525.9px;top:357.1px;width:40px;text-align:center;font-size:9.6px;color:#c0c1cf;letter-spacing:-0.12px;-webkit-text-stroke:0.2px #c0c1cf">11:30</div>
<div class="vl" style="left:1545.4px;top:352.0px;height:3px;background:#2d2f35"></div>
<div class="t" style="left:1570.2px;top:357.1px;width:40px;text-align:center;font-size:9.6px;color:#c0c1cf;letter-spacing:-0.12px;-webkit-text-stroke:0.2px #c0c1cf">12:00</div>
<div class="vl" style="left:1589.7px;top:352.0px;height:3px;background:#2d2f35"></div>
<div class="t" style="left:1614.4px;top:357.1px;width:40px;text-align:center;font-size:9.6px;color:#c0c1cf;letter-spacing:-0.12px;-webkit-text-stroke:0.2px #c0c1cf">12:30</div>
<div class="vl" style="left:1633.9px;top:352.0px;height:3px;background:#2d2f35"></div>
<div class="t" style="left:1658.6px;top:357.1px;width:40px;text-align:center;font-size:9.6px;color:#c0c1cf;letter-spacing:-0.12px;-webkit-text-stroke:0.2px #c0c1cf">13:00</div>
<div class="vl" style="left:1678.1px;top:352.0px;height:3px;background:#2d2f35"></div>
<div class="t" style="left:1702.8px;top:357.1px;width:40px;text-align:center;font-size:9.6px;color:#c0c1cf;letter-spacing:-0.12px;-webkit-text-stroke:0.2px #c0c1cf">13:30</div>
<div class="vl" style="left:1722.3px;top:352.0px;height:3px;background:#2d2f35"></div>
<div class="t" style="left:1747.0px;top:357.1px;width:40px;text-align:center;font-size:9.6px;color:#c0c1cf;letter-spacing:-0.12px;-webkit-text-stroke:0.2px #c0c1cf">14:00</div>
<div class="vl" style="left:1766.5px;top:352.0px;height:3px;background:#2d2f35"></div>
<div class="t" style="left:1791.3px;top:357.1px;width:40px;text-align:center;font-size:9.6px;color:#c0c1cf;letter-spacing:-0.12px;-webkit-text-stroke:0.2px #c0c1cf">14:30</div>
<div class="vl" style="left:1810.8px;top:352.0px;height:3px;background:#2d2f35"></div>
<div class="t" style="left:1835.5px;top:357.1px;width:40px;text-align:center;font-size:9.6px;color:#c0c1cf;letter-spacing:-0.12px;-webkit-text-stroke:0.2px #c0c1cf">15:00</div>
<div class="vl" style="left:1855.0px;top:352.0px;height:3px;background:#2d2f35"></div>
<div class="t" style="left:1879.7px;top:357.1px;width:40px;text-align:center;font-size:9.6px;color:#c0c1cf;letter-spacing:-0.12px;-webkit-text-stroke:0.2px #c0c1cf">15:30</div>
<div class="vl" style="left:1899.2px;top:352.0px;height:3px;background:#2d2f35"></div>
<div class="t" style="left:1923.9px;top:357.1px;width:40px;text-align:center;font-size:9.6px;color:#c0c1cf;letter-spacing:-0.12px;-webkit-text-stroke:0.2px #c0c1cf">16:00</div>
<div class="vl" style="left:1943.4px;top:352.0px;height:3px;background:#2d2f35"></div>
<div class="t" style="left:1438.8px;top:371.0px;font-size:9.6px;color:#6e9fff;letter-spacing:0px;-webkit-text-stroke:0.3px #6e9fff">Name</div>
<div class="t" style="right:40.7px;top:371.0px;font-size:9.6px;color:#6e9fff;letter-spacing:0px;-webkit-text-stroke:0.3px #6e9fff">Last</div>
<svg style="left:1959.8px;top:374.5px" width="6" height="4" viewBox="0 0 6 4"><path d="M0.800 0.800L3 3L5.200 0.800" stroke="#6e9fff" stroke-width="1" fill="none"/></svg>
<div class="hl" style="left:1416.2px;top:384.3px;width:555.0px;background:#2a2c32"></div>
<div class="hl" style="left:1416.2px;top:402.8px;width:555.0px;background:#2a2c32"></div>
<div class="hl" style="left:1416.2px;top:420.8px;width:555.0px;background:#2a2c32"></div>
<div class="abs" style="left:1422.1px;top:392.2px;width:10.600px;height:3px;border-radius:1.5px;background:#e6e6ee"></div>
<div class="t pri" style="left:1438.8px;top:388.5px;font-size:9.6px;letter-spacing:0.22px">info</div>
<div class="t pri" style="right:33.2px;top:388.5px;font-size:9.6px;letter-spacing:0.3px">36</div>
<div class="abs" style="left:1422.1px;top:410.5px;width:10.600px;height:3px;border-radius:1.5px;background:#ff9830"></div>
<div class="t pri" style="left:1438.8px;top:406.8px;font-size:9.6px;letter-spacing:0.22px">warning</div>
<div class="t pri" style="right:33.2px;top:406.8px;font-size:9.6px;letter-spacing:0.3px">4</div>
<!-- table -->
<div class="hl" style="left:266.600px;top:486px;width:1705.400px;background:#2d2f35"></div>
<div class="t pri" style="left:270.9px;top:470.500px;font-size:11.2px;letter-spacing:0.172px;-webkit-text-stroke:0.3px #ccccdc">alertname</div>
<svg style="left:326.6px;top:471.800px" width="10" height="10" viewBox="0 0 10 10"><path d="M0.800 0.800H9.200L6 4.600V8.400L4 9.200V4.600Z" fill="none" stroke="#9d9eab" stroke-width="1" stroke-linejoin="round"/></svg>
<div class="t pri" style="left:484.0px;top:470.500px;font-size:11.2px;letter-spacing:0.182px;-webkit-text-stroke:0.3px #ccccdc">severity</div>
<svg style="left:528.4px;top:471.800px" width="10" height="10" viewBox="0 0 10 10"><path d="M0.800 0.800H9.200L6 4.600V8.400L4 9.200V4.600Z" fill="none" stroke="#9d9eab" stroke-width="1" stroke-linejoin="round"/></svg>
<div class="t pri" style="left:697.2px;top:470.500px;font-size:11.2px;letter-spacing:0.221px;-webkit-text-stroke:0.3px #ccccdc">cluster</div>
<svg style="left:736.1px;top:471.800px" width="10" height="10" viewBox="0 0 10 10"><path d="M0.800 0.800H9.200L6 4.600V8.400L4 9.200V4.600Z" fill="none" stroke="#9d9eab" stroke-width="1" stroke-linejoin="round"/></svg>
<div class="t pri" style="left:910.6px;top:470.500px;font-size:11.2px;letter-spacing:0.051px;-webkit-text-stroke:0.3px #ccccdc">namespace</div>
<svg style="left:973.3px;top:471.800px" width="10" height="10" viewBox="0 0 10 10"><path d="M0.800 0.800H9.200L6 4.600V8.400L4 9.200V4.600Z" fill="none" stroke="#9d9eab" stroke-width="1" stroke-linejoin="round"/></svg>
<div class="t pri" style="left:1123.7px;top:470.500px;font-size:11.2px;letter-spacing:0.240px;-webkit-text-stroke:0.3px #ccccdc">workload</div>
<svg style="left:1174.8px;top:471.800px" width="10" height="10" viewBox="0 0 10 10"><path d="M0.800 0.800H9.200L6 4.600V8.400L4 9.200V4.600Z" fill="none" stroke="#9d9eab" stroke-width="1" stroke-linejoin="round"/></svg>
<div class="t pri" style="left:1336.9px;top:470.500px;font-size:11.2px;letter-spacing:0.309px;-webkit-text-stroke:0.3px #ccccdc">pod</div>
<svg style="left:1360.9px;top:471.800px" width="10" height="10" viewBox="0 0 10 10"><path d="M0.800 0.800H9.200L6 4.600V8.400L4 9.200V4.600Z" fill="none" stroke="#9d9eab" stroke-width="1" stroke-linejoin="round"/></svg>
<div class="t pri" style="left:1550.0px;top:470.500px;font-size:11.2px;letter-spacing:0.274px;-webkit-text-stroke:0.3px #ccccdc">container</div>
<svg style="left:1602.9px;top:471.800px" width="10" height="10" viewBox="0 0 10 10"><path d="M0.800 0.800H9.200L6 4.600V8.400L4 9.200V4.600Z" fill="none" stroke="#9d9eab" stroke-width="1" stroke-linejoin="round"/></svg>
<div class="t pri" style="left:1763.0px;top:470.500px;font-size:11.2px;letter-spacing:0.147px;-webkit-text-stroke:0.3px #ccccdc">reason</div>
<svg style="left:1802.5px;top:471.800px" width="10" height="10" viewBox="0 0 10 10"><path d="M0.800 0.800H9.200L6 4.600V8.400L4 9.200V4.600Z" fill="none" stroke="#9d9eab" stroke-width="1" stroke-linejoin="round"/></svg>
<div class="hl" style="left:266.600px;top:518.8px;width:1705.400px;background:#25272c"></div>
<div class="hl" style="left:266.600px;top:551.8px;width:1705.400px;background:#25272c"></div>
<div class="hl" style="left:266.600px;top:584.8px;width:1705.400px;background:#25272c"></div>
<div class="hl" style="left:266.600px;top:617.8px;width:1705.400px;background:#25272c"></div>
<div class="hl" style="left:266.600px;top:650.8px;width:1705.400px;background:#25272c"></div>
<div class="hl" style="left:266.600px;top:683.8px;width:1705.400px;background:#25272c"></div>
<div class="vl" style="left:479.0px;top:487px;height:213px;background:#25272c"></div>
<div class="vl" style="left:692.1px;top:487px;height:213px;background:#25272c"></div>
<div class="vl" style="left:905.2px;top:487px;height:213px;background:#25272c"></div>
<div class="vl" style="left:1118.3px;top:487px;height:213px;background:#25272c"></div>
<div class="vl" style="left:1331.4px;top:487px;height:213px;background:#25272c"></div>
<div class="vl" style="left:1544.5px;top:487px;height:213px;background:#25272c"></div>
<div class="vl" style="left:1757.6px;top:487px;height:213px;background:#25272c"></div>
<div class="t" style="left:270.9px;top:495.2px;font-size:11.2px;letter-spacing:0.129px;color:#6a98f4;-webkit-text-stroke:0.25px #6a98f4">KubeMemoryOvercommit</div>
<div class="t" style="left:484.0px;top:495.2px;font-size:11.2px;letter-spacing:0.059px;color:#ccccdc;-webkit-text-stroke:0.25px #ccccdc">warning</div>
<div class="t" style="left:697.2px;top:495.2px;font-size:11.2px;letter-spacing:0.339px;color:#6a98f4;-webkit-text-stroke:0.25px #6a98f4">otel-demo</div>
<div class="t" style="left:270.9px;top:528.2px;font-size:11.2px;letter-spacing:0.117px;color:#6a98f4;-webkit-text-stroke:0.25px #6a98f4">KubeDeploymentReplicasMismatch</div>
<div class="t" style="left:484.0px;top:528.2px;font-size:11.2px;letter-spacing:0.059px;color:#ccccdc;-webkit-text-stroke:0.25px #ccccdc">warning</div>
<div class="t" style="left:697.2px;top:528.2px;font-size:11.2px;letter-spacing:0.360px;color:#6a98f4;-webkit-text-stroke:0.25px #6a98f4">se-demo-cluster</div>
<div class="t" style="left:910.6px;top:528.2px;font-size:11.2px;letter-spacing:0.047px;color:#6a98f4;-webkit-text-stroke:0.25px #6a98f4">broken</div>
<div class="t" style="left:1123.7px;top:528.2px;font-size:11.2px;letter-spacing:0.274px;color:#6a98f4;-webkit-text-stroke:0.25px #6a98f4">nginx-crashing</div>
<div class="t" style="left:270.9px;top:561.2px;font-size:11.2px;letter-spacing:0.184px;color:#6a98f4;-webkit-text-stroke:0.25px #6a98f4">CPUThrottlingHigh</div>
<div class="t" style="left:484.0px;top:561.2px;font-size:11.2px;letter-spacing:0.213px;color:#ccccdc;-webkit-text-stroke:0.25px #ccccdc">info</div>
<div class="t" style="left:697.2px;top:561.2px;font-size:11.2px;letter-spacing:0.360px;color:#6a98f4;-webkit-text-stroke:0.25px #6a98f4">se-demo-cluster</div>
<div class="t" style="left:910.6px;top:561.2px;font-size:11.2px;letter-spacing:0.158px;color:#6a98f4;-webkit-text-stroke:0.25px #6a98f4">development</div>
<div class="t" style="left:1123.7px;top:561.2px;font-size:11.2px;letter-spacing:0.292px;color:#6a98f4;-webkit-text-stroke:0.25px #6a98f4">data-generator</div>
<div class="t" style="left:1336.9px;top:561.2px;font-size:11.2px;letter-spacing:0.404px;color:#6a98f4;-webkit-text-stroke:0.25px #6a98f4">data-generator-746f8459d7-299gd</div>
<div class="t" style="left:1550.0px;top:561.2px;font-size:11.2px;letter-spacing:0.292px;color:#6a98f4;-webkit-text-stroke:0.25px #6a98f4">data-generator</div>
<div class="t" style="left:270.9px;top:594.2px;font-size:11.2px;letter-spacing:0.184px;color:#6a98f4;-webkit-text-stroke:0.25px #6a98f4">CPUThrottlingHigh</div>
<div class="t" style="left:484.0px;top:594.2px;font-size:11.2px;letter-spacing:0.213px;color:#ccccdc;-webkit-text-stroke:0.25px #ccccdc">info</div>
<div class="t" style="left:697.2px;top:594.2px;font-size:11.2px;letter-spacing:0.360px;color:#6a98f4;-webkit-text-stroke:0.25px #6a98f4">se-demo-cluster</div>
<div class="t" style="left:910.6px;top:594.2px;font-size:11.2px;letter-spacing:0.158px;color:#6a98f4;-webkit-text-stroke:0.25px #6a98f4">development</div>
<div class="t" style="left:1123.7px;top:594.2px;font-size:11.2px;letter-spacing:0.292px;color:#6a98f4;-webkit-text-stroke:0.25px #6a98f4">data-generator</div>
<div class="t" style="left:1336.9px;top:594.2px;font-size:11.2px;letter-spacing:0.404px;color:#6a98f4;-webkit-text-stroke:0.25px #6a98f4">data-generator-746f8459d7-299gd</div>
<div class="t" style="left:1550.0px;top:594.2px;font-size:11.2px;letter-spacing:0.292px;color:#6a98f4;-webkit-text-stroke:0.25px #6a98f4">data-generator</div>
<div class="t" style="left:270.9px;top:627.2px;font-size:11.2px;letter-spacing:0.184px;color:#6a98f4;-webkit-text-stroke:0.25px #6a98f4">CPUThrottlingHigh</div>
<div class="t" style="left:484.0px;top:627.2px;font-size:11.2px;letter-spacing:0.213px;color:#ccccdc;-webkit-text-stroke:0.25px #ccccdc">info</div>
<div class="t" style="left:697.2px;top:627.2px;font-size:11.2px;letter-spacing:0.360px;color:#6a98f4;-webkit-text-stroke:0.25px #6a98f4">se-demo-cluster</div>
<div class="t" style="left:910.6px;top:627.2px;font-size:11.2px;letter-spacing:0.305px;color:#6a98f4;-webkit-text-stroke:0.25px #6a98f4">production</div>
<div class="t" style="left:1123.7px;top:627.2px;font-size:11.2px;letter-spacing:0.292px;color:#6a98f4;-webkit-text-stroke:0.25px #6a98f4">data-generator</div>
<div class="t" style="left:1336.9px;top:627.2px;font-size:11.2px;letter-spacing:0.419px;color:#6a98f4;-webkit-text-stroke:0.25px #6a98f4">data-generator-6f67b8d655-68slb</div>
<div class="t" style="left:1550.0px;top:627.2px;font-size:11.2px;letter-spacing:0.292px;color:#6a98f4;-webkit-text-stroke:0.25px #6a98f4">data-generator</div>
<div class="t" style="left:270.9px;top:660.2px;font-size:11.2px;letter-spacing:0.184px;color:#6a98f4;-webkit-text-stroke:0.25px #6a98f4">CPUThrottlingHigh</div>
<div class="t" style="left:484.0px;top:660.2px;font-size:11.2px;letter-spacing:0.213px;color:#ccccdc;-webkit-text-stroke:0.25px #ccccdc">info</div>
<div class="t" style="left:697.2px;top:660.2px;font-size:11.2px;letter-spacing:0.360px;color:#6a98f4;-webkit-text-stroke:0.25px #6a98f4">se-demo-cluster</div>
<div class="t" style="left:910.6px;top:660.2px;font-size:11.2px;letter-spacing:0.305px;color:#6a98f4;-webkit-text-stroke:0.25px #6a98f4">production</div>
<div class="t" style="left:1123.7px;top:660.2px;font-size:11.2px;letter-spacing:0.292px;color:#6a98f4;-webkit-text-stroke:0.25px #6a98f4">data-generator</div>
<div class="t" style="left:1336.9px;top:660.2px;font-size:11.2px;letter-spacing:0.419px;color:#6a98f4;-webkit-text-stroke:0.25px #6a98f4">data-generator-6f67b8d655-68slb</div>
<div class="t" style="left:1550.0px;top:660.2px;font-size:11.2px;letter-spacing:0.292px;color:#6a98f4;-webkit-text-stroke:0.25px #6a98f4">data-generator</div>
<div class="t" style="left:270.9px;top:693.2px;font-size:11.2px;letter-spacing:0.184px;color:#6a98f4;-webkit-text-stroke:0.25px #6a98f4">CPUThrottlingHigh</div>
<div class="t" style="left:484.0px;top:693.2px;font-size:11.2px;letter-spacing:0.213px;color:#ccccdc;-webkit-text-stroke:0.25px #ccccdc">info</div>
<div class="t" style="left:697.2px;top:693.2px;font-size:11.2px;letter-spacing:0.360px;color:#6a98f4;-webkit-text-stroke:0.25px #6a98f4">se-demo-cluster</div>
<div class="t" style="left:910.6px;top:693.2px;font-size:11.2px;letter-spacing:0.158px;color:#6a98f4;-webkit-text-stroke:0.25px #6a98f4">development</div>
<div class="t" style="left:1123.7px;top:693.2px;font-size:11.2px;letter-spacing:0.222px;color:#6a98f4;-webkit-text-stroke:0.25px #6a98f4">kibana</div>
<div class="t" style="left:1336.9px;top:693.2px;font-size:11.2px;letter-spacing:0.453px;color:#6a98f4;-webkit-text-stroke:0.25px #6a98f4">kibana-6965448d89-qz6kv</div>
<div class="t" style="left:1550.0px;top:693.2px;font-size:11.2px;letter-spacing:0.222px;color:#6a98f4;-webkit-text-stroke:0.25px #6a98f4">kibana</div>
</div>
<div class="bfade"></div>
</div>
</body></html>
